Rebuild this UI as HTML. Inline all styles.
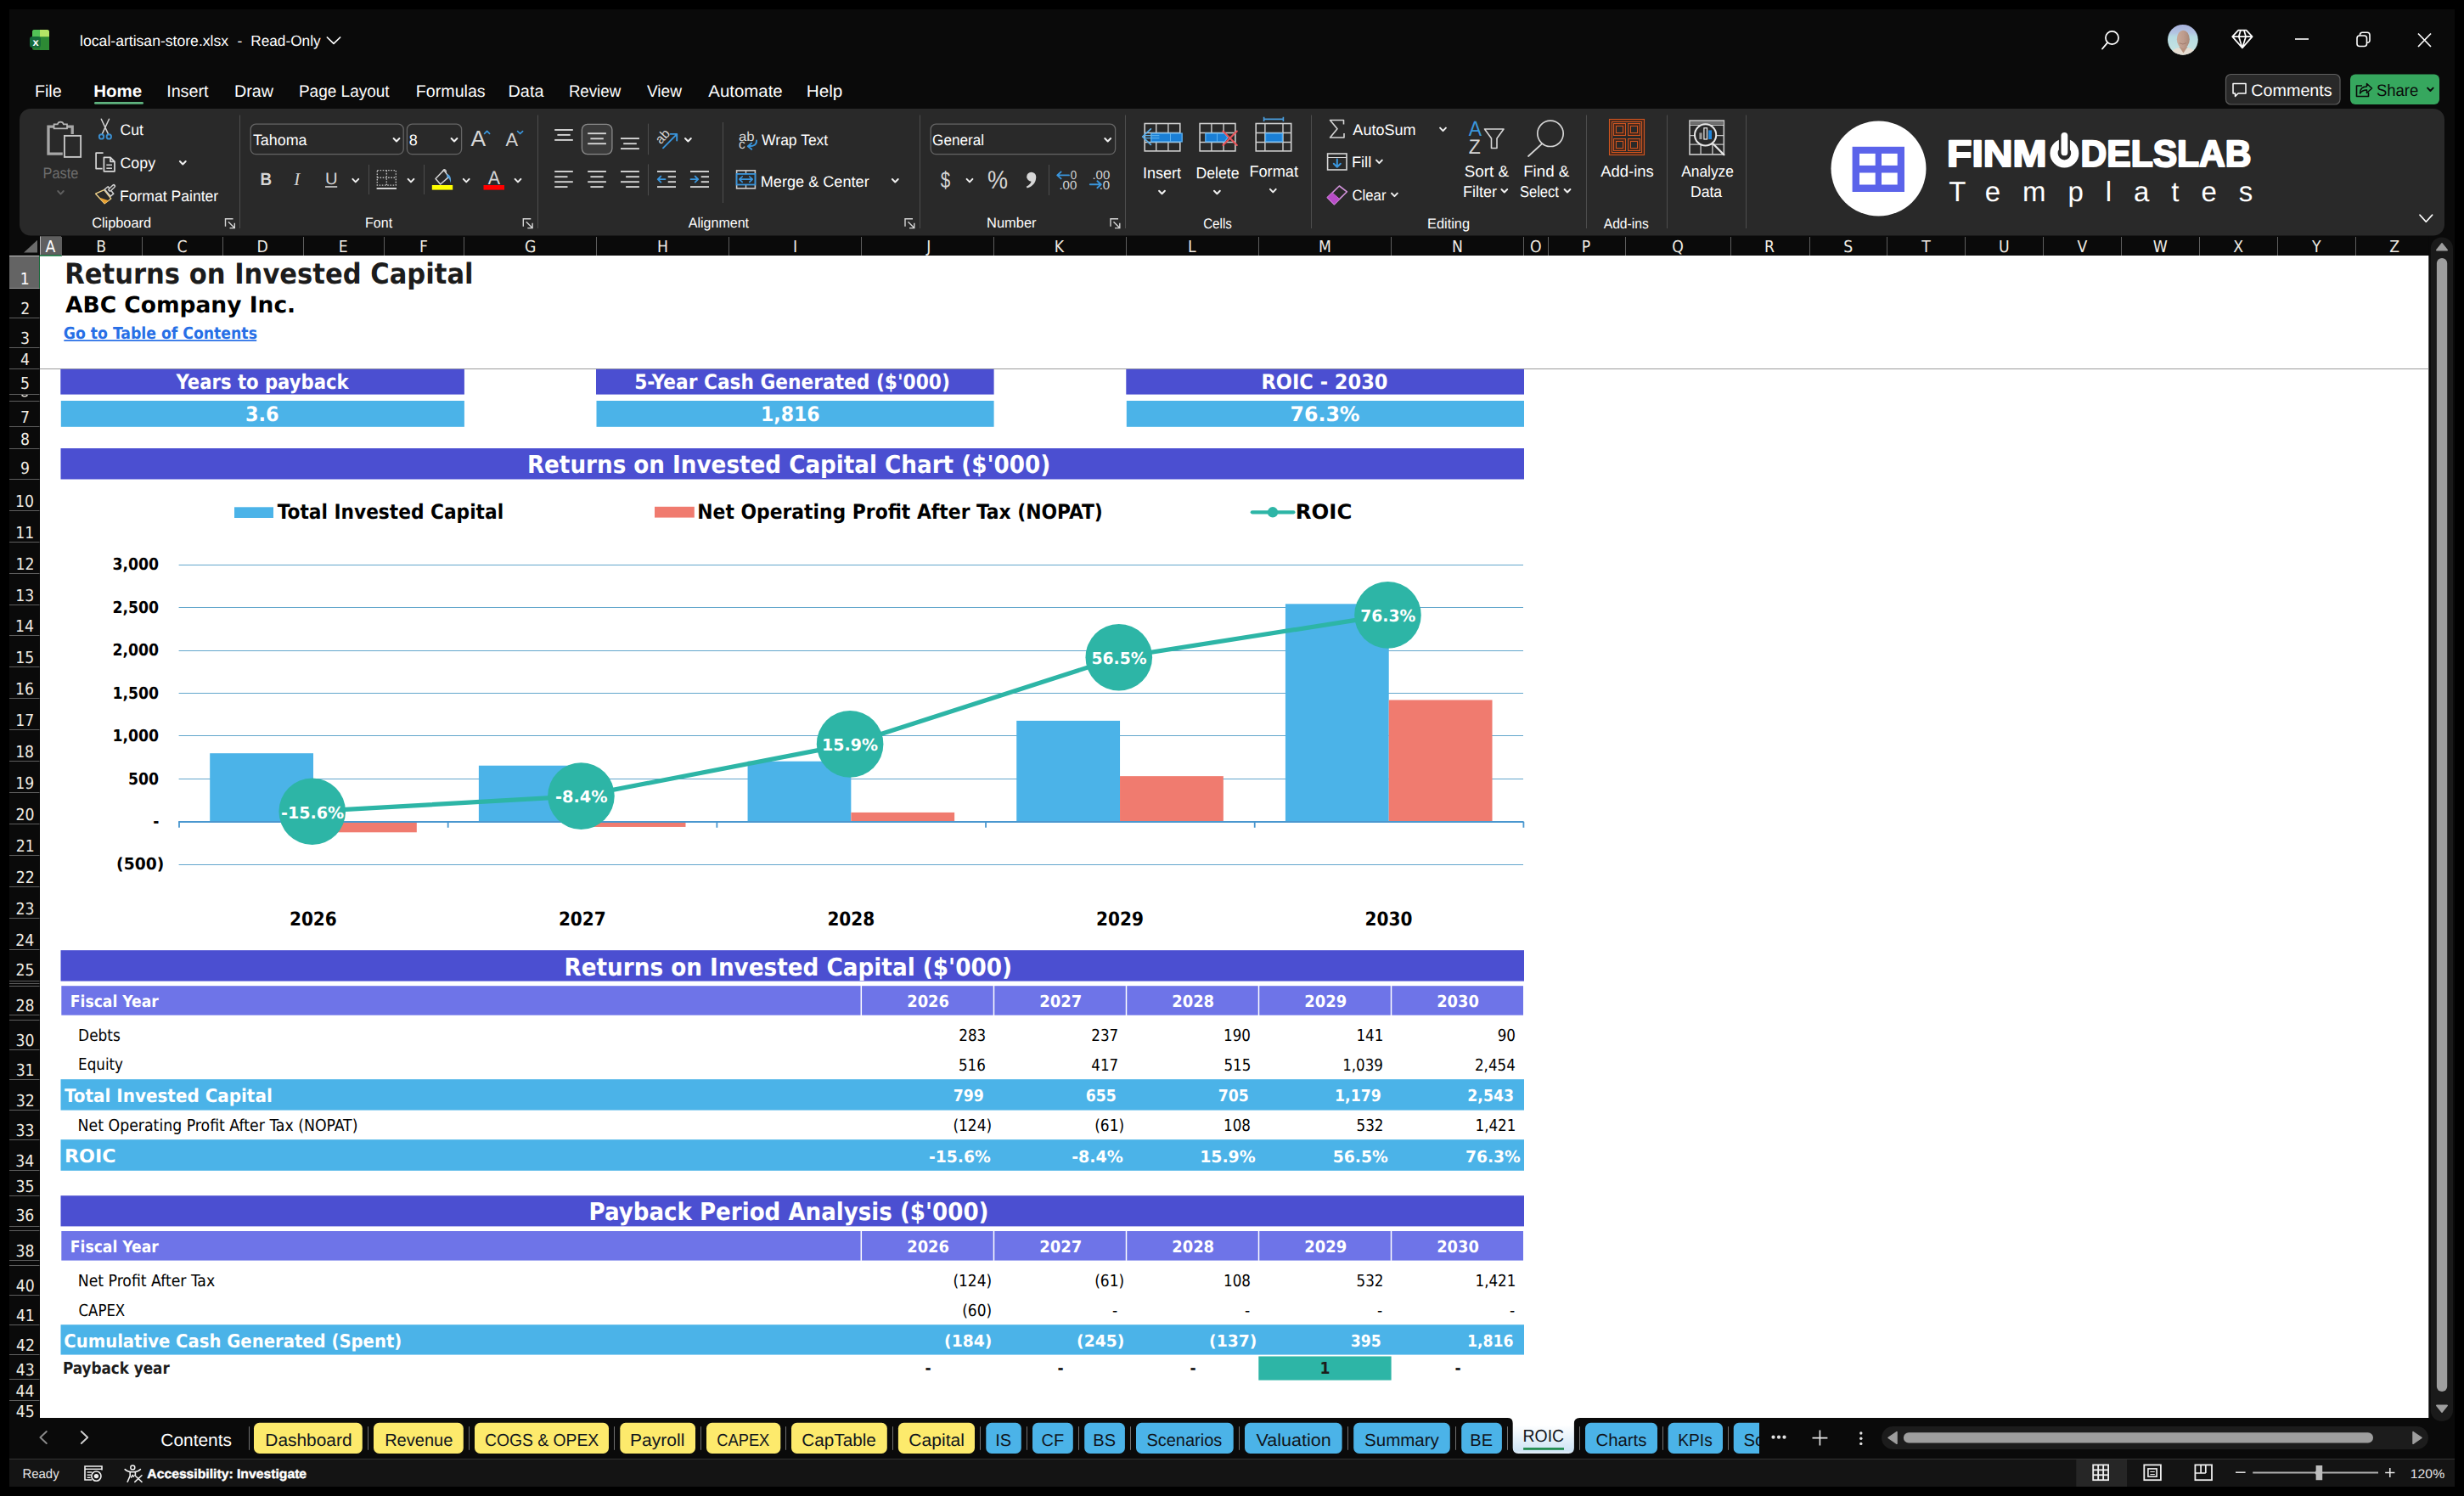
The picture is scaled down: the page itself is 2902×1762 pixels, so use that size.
<!DOCTYPE html>
<html lang="en"><head><meta charset="utf-8"><title>local-artisan-store.xlsx - Excel</title>
<style>html,body{margin:0;padding:0;background:#000;overflow:hidden}svg{display:block}text{white-space:pre}</style></head>
<body>
<svg width="2902" height="1762" viewBox="0 0 2902 1762" text-rendering="geometricPrecision">
<rect width="2902" height="1762" fill="#000"/>
<rect x="11.00" y="11.00" width="2880.00" height="1740.00" fill="#0a0a0a" />
<g transform="translate(35,35)">
<rect x="3.00" y="0.00" width="20.00" height="24.00" fill="#2a7a30" rx="2.5" />
<path d="M3 2.5 a2.5 2.5 0 0 1 2.5 -2.5 H12 V8.5 H3 Z" fill="#52c257" />
<path d="M12 0 H20.5 a2.5 2.5 0 0 1 2.5 2.5 V8.5 H12 Z" fill="#b4e565" />
<rect x="12.00" y="8.50" width="11.00" height="15.50" fill="#2d8a34" />
<rect x="0.00" y="8.00" width="13.00" height="13.00" fill="#156b3a" rx="3" />
</g>
<text x="38.51" y="53.50" font-family="'Liberation Sans', sans-serif" font-size="12.5" fill="#fff" font-weight="bold" textLength="7.18" lengthAdjust="spacingAndGlyphs" >x</text>
<text x="94.12" y="54.00" font-family="'Liberation Sans', sans-serif" font-size="17.5" fill="#fff" textLength="174.97" lengthAdjust="spacingAndGlyphs" >local-artisan-store.xlsx</text>
<text x="279.42" y="54.00" font-family="'Liberation Sans', sans-serif" font-size="17.5" fill="#fff" >-</text>
<text x="295.26" y="54.00" font-family="'Liberation Sans', sans-serif" font-size="17.5" fill="#fff" textLength="82.37" lengthAdjust="spacingAndGlyphs" >Read-Only</text>
<path d="M385.35 44.00 L393.00 51.40 L400.65 44.00" fill="none" stroke="#fff" stroke-width="1.7" stroke-linecap="round" stroke-linejoin="round"/>
<circle cx="2487.50" cy="44.50" r="7.60" fill="none" stroke="#fff" stroke-width="1.7" />
<line x1="2482.00" y1="50.30" x2="2476.00" y2="57.50" stroke="#fff" stroke-width="1.8" stroke-linecap="round"/>
<defs><clipPath id="av"><circle cx="2570.9" cy="46.8" r="17.9"/></clipPath><linearGradient id="avg" x1="0" y1="0" x2="0" y2="1"><stop offset="0" stop-color="#a7b0dc"/><stop offset="0.28" stop-color="#b3c4e2"/><stop offset="0.4" stop-color="#b6dbe2"/><stop offset="1" stop-color="#cbe6e2"/></linearGradient><linearGradient id="avf" x1="0" y1="0" x2="1" y2="0"><stop offset="0" stop-color="#c9a999"/><stop offset="0.55" stop-color="#bd9b8c"/><stop offset="1" stop-color="#a98878"/></linearGradient></defs>
<g clip-path="url(#av)">
<rect x="2552.00" y="28.00" width="38.00" height="38.00" fill="url(#avg)" />
<path d="M2556 66 C2557 59.5 2562 57 2566 56 L2571.5 61 L2577 56 C2582 57.5 2586 60 2587 66 Z" fill="#e6ddd2" />
<path d="M2566.5 55 L2571.5 62.5 L2576.5 55 Z" fill="#b8927f" />
<ellipse cx="2571.3" cy="46.3" rx="7.5" ry="10.6" fill="url(#avf)"/>
<path d="M2566.8 50.8 Q2571 53.2 2575 50.6" fill="none" stroke="#9a7566" stroke-width="0.8" />
</g>
<path d="M2636.2 35.6 H2645.6 L2652.6 43.1 L2640.9 56.4 L2629.2 43.1 Z M2629.2 43.1 H2652.6 M2639 35.6 L2636.7 43.1 L2640.9 56.4 L2645.1 43.1 L2642.8 35.6" fill="none" stroke="#fff" stroke-width="1.7" stroke-linejoin="round"/>
<line x1="2703.00" y1="46.00" x2="2719.00" y2="46.00" stroke="#fff" stroke-width="1.6" />
<rect x="2776.00" y="42.00" width="11.50" height="12.50" fill="none" rx="3" stroke="#fff" stroke-width="1.6" />
<path d="M2779.5 41.8 V41 a2.8 2.8 0 0 1 2.8 -2.8 H2788 a3 3 0 0 1 3 3 V47.5 a2.8 2.8 0 0 1 -2.8 2.8 H2787.8" fill="none" stroke="#fff" stroke-width="1.6" />
<path d="M2848 39.5 L2863 55 M2863 39.5 L2848 55" fill="none" stroke="#fff" stroke-width="1.7" />
<rect x="2621.50" y="87.50" width="134.50" height="35.50" fill="#292929" rx="6" stroke="#5e5e5e" stroke-width="1.2" />
<path d="M2630 98.5 H2645 V110 H2636 L2632.5 113.5 V110 H2630 Z" fill="none" stroke="#fff" stroke-width="1.5" stroke-linejoin="round"/>
<text x="2651.31" y="113.00" font-family="'Liberation Sans', sans-serif" font-size="19.5" fill="#fff" textLength="95.39" lengthAdjust="spacingAndGlyphs" >Comments</text>
<rect x="2768.00" y="87.50" width="105.00" height="35.50" fill="#36a75e" rx="6" />
<path d="M2782 101 H2775.5 V113.5 H2789.5 V109" fill="none" stroke="#0a0a0a" stroke-width="1.6" stroke-linejoin="round"/>
<path d="M2779.5 110 C2779.5 104.5 2783 102 2787.5 102 V98.5 L2793.5 104 L2787.5 109.5 V106 C2784 106 2781.5 107 2779.5 110 Z" fill="none" stroke="#0a0a0a" stroke-width="1.5" stroke-linejoin="round"/>
<text x="2798.91" y="113.00" font-family="'Liberation Sans', sans-serif" font-size="19.5" fill="#0a0a0a" textLength="49.45" lengthAdjust="spacingAndGlyphs" >Share</text>
<path d="M2859.10 103.60 L2862.40 107.00 L2865.70 103.60" fill="none" stroke="#0a0a0a" stroke-width="1.9" stroke-linecap="round" stroke-linejoin="round"/>
<text x="40.98" y="113.60" font-family="'Liberation Sans', sans-serif" font-size="19.8" fill="#fff" textLength="31.70" lengthAdjust="spacingAndGlyphs" >File</text>
<text x="110.18" y="113.60" font-family="'Liberation Sans', sans-serif" font-size="19.8" fill="#fff" font-weight="bold" textLength="57.00" lengthAdjust="spacingAndGlyphs" >Home</text>
<text x="196.17" y="113.60" font-family="'Liberation Sans', sans-serif" font-size="19.8" fill="#fff" textLength="49.37" lengthAdjust="spacingAndGlyphs" >Insert</text>
<text x="275.98" y="113.60" font-family="'Liberation Sans', sans-serif" font-size="19.8" fill="#fff" textLength="45.98" lengthAdjust="spacingAndGlyphs" >Draw</text>
<text x="351.88" y="113.60" font-family="'Liberation Sans', sans-serif" font-size="19.8" fill="#fff" textLength="106.77" lengthAdjust="spacingAndGlyphs" >Page Layout</text>
<text x="489.78" y="113.60" font-family="'Liberation Sans', sans-serif" font-size="19.8" fill="#fff" textLength="81.94" lengthAdjust="spacingAndGlyphs" >Formulas</text>
<text x="598.58" y="113.60" font-family="'Liberation Sans', sans-serif" font-size="19.8" fill="#fff" textLength="41.82" lengthAdjust="spacingAndGlyphs" >Data</text>
<text x="669.88" y="113.60" font-family="'Liberation Sans', sans-serif" font-size="19.8" fill="#fff" textLength="61.28" lengthAdjust="spacingAndGlyphs" >Review</text>
<text x="761.91" y="113.60" font-family="'Liberation Sans', sans-serif" font-size="19.8" fill="#fff" textLength="41.04" lengthAdjust="spacingAndGlyphs" >View</text>
<text x="834.36" y="113.60" font-family="'Liberation Sans', sans-serif" font-size="19.8" fill="#fff" textLength="87.32" lengthAdjust="spacingAndGlyphs" >Automate</text>
<text x="949.68" y="113.60" font-family="'Liberation Sans', sans-serif" font-size="19.8" fill="#fff" textLength="42.66" lengthAdjust="spacingAndGlyphs" >Help</text>
<rect x="111.00" y="120.00" width="58.00" height="2.80" fill="#5fb37f" rx="1.4" />
<rect x="23.00" y="128.00" width="2856.00" height="149.60" fill="#292929" rx="13" />
<path d="M64.5 149.2 H57 V181.2 H73.8" fill="none" stroke="#a6a6a6" stroke-width="3.3" />
<path d="M78 149.2 H85.2 V158" fill="none" stroke="#a6a6a6" stroke-width="3.3" />
<path d="M63.6 151.4 V146.4 H67.8 a3.6 3.6 0 0 1 7 0 H79 V151.4 Z" fill="#292929" stroke="#b8b8b8" stroke-width="1.7" />
<rect x="75.90" y="159.90" width="19.20" height="25.00" fill="#292929" stroke="#c6c6c6" stroke-width="1.9" />
<text x="50.52" y="209.80" font-family="'Liberation Sans', sans-serif" font-size="18" fill="#6c6c6c" textLength="41.98" lengthAdjust="spacingAndGlyphs" >Paste</text>
<path d="M68.20 225.00 L71.50 228.60 L74.80 225.00" fill="none" stroke="#5f5f5f" stroke-width="1.9" stroke-linecap="round" stroke-linejoin="round"/>
<path d="M119.3 140.3 L127.4 157.6 M128.5 140.3 L120.4 157.6" fill="none" stroke="#d4d4d4" stroke-width="1.5" stroke-linecap="round"/>
<circle cx="119.50" cy="160.90" r="2.70" fill="none" stroke="#3b8fd0" stroke-width="1.9" />
<circle cx="128.30" cy="160.90" r="2.70" fill="none" stroke="#3b8fd0" stroke-width="1.9" />
<text x="141.49" y="158.60" font-family="'Liberation Sans', sans-serif" font-size="18" fill="#fff" textLength="27.35" lengthAdjust="spacingAndGlyphs" >Cut</text>
<path d="M121.6 180.2 H113.1 V198.6 H120.6" fill="none" stroke="#d6d6d6" stroke-width="1.7" stroke-linejoin="round"/>
<path d="M122.4 185.3 H130 L135 190.3 V201.8 H122.4 Z M130 185.3 V190.3 H135" fill="none" stroke="#d6d6d6" stroke-width="1.7" stroke-linejoin="round"/>
<line x1="125.30" y1="194.30" x2="132.00" y2="194.30" stroke="#d6d6d6" stroke-width="1.5" />
<line x1="125.30" y1="198.20" x2="132.00" y2="198.20" stroke="#d6d6d6" stroke-width="1.5" />
<text x="141.49" y="198.00" font-family="'Liberation Sans', sans-serif" font-size="18" fill="#fff" textLength="41.55" lengthAdjust="spacingAndGlyphs" >Copy</text>
<path d="M211.90 189.95 L215.30 193.45 L218.70 189.95" fill="none" stroke="#f0f0f0" stroke-width="2.0" stroke-linecap="round" stroke-linejoin="round"/>
<path d="M112.6 228.2 L122.6 223.6 L130.8 234 L123.2 239.8 Z" fill="#292929" stroke="#f3d58c" stroke-width="1.3" stroke-linejoin="round"/>
<path d="M116.8 232.4 L128 236.2 L123.2 239.7 Z" fill="#e9a030" />
<path d="M123.2 223 L127.2 219.8 L133.8 228.2 L130.2 231.2 Z" fill="#292929" stroke="#d0d0d0" stroke-width="1.5" stroke-linejoin="round"/>
<line x1="129.40" y1="223.60" x2="134.00" y2="219.20" stroke="#d0d0d0" stroke-width="4.4" stroke-linecap="round"/>
<line x1="129.60" y1="223.40" x2="133.80" y2="219.40" stroke="#292929" stroke-width="1.5" stroke-linecap="round"/>
<text x="140.92" y="237.00" font-family="'Liberation Sans', sans-serif" font-size="18" fill="#fff" textLength="116.28" lengthAdjust="spacingAndGlyphs" >Format Painter</text>
<text x="108.15" y="268.20" font-family="'Liberation Sans', sans-serif" font-size="16.8" fill="#fff" textLength="69.94" lengthAdjust="spacingAndGlyphs" >Clipboard</text>
<path d="M265.5 266.8 V257.8 H274.5" fill="none" stroke="#d6d6d6" stroke-width="1.4" />
<path d="M269.0 261.3 L276.0 268.3 M276.3 262.8 V268.6 H270.5" fill="none" stroke="#d6d6d6" stroke-width="1.4" />
<line x1="282.50" y1="135.50" x2="282.50" y2="269.00" stroke="#4d4d4d" stroke-width="1" />
<rect x="295.20" y="146.20" width="180.00" height="35.40" fill="none" rx="6" stroke="#666" stroke-width="1.3" />
<text x="297.90" y="171.30" font-family="'Liberation Sans', sans-serif" font-size="18" fill="#fff" textLength="63.70" lengthAdjust="spacingAndGlyphs" >Tahoma</text>
<path d="M463.60 163.05 L467.00 166.55 L470.40 163.05" fill="none" stroke="#f0f0f0" stroke-width="2.0" stroke-linecap="round" stroke-linejoin="round"/>
<rect x="479.40" y="146.20" width="64.20" height="35.40" fill="none" rx="6" stroke="#666" stroke-width="1.3" />
<text x="481.82" y="171.30" font-family="'Liberation Sans', sans-serif" font-size="18" fill="#fff" >8</text>
<path d="M531.60 163.05 L535.00 166.55 L538.40 163.05" fill="none" stroke="#f0f0f0" stroke-width="2.0" stroke-linecap="round" stroke-linejoin="round"/>
<text x="554.45" y="172.00" font-family="'Liberation Sans', sans-serif" font-size="26" fill="#d6d6d6" textLength="17.60" lengthAdjust="spacingAndGlyphs" >A</text>
<path d="M570.6 157.3 L573.6 154.4 L576.6 157.3" fill="none" stroke="#3a96dd" stroke-width="1.7" stroke-linecap="round" stroke-linejoin="round"/>
<text x="595.46" y="172.00" font-family="'Liberation Sans', sans-serif" font-size="22" fill="#d6d6d6" textLength="14.59" lengthAdjust="spacingAndGlyphs" >A</text>
<path d="M609.6 154.6 L612.6 157.5 L615.6 154.6" fill="none" stroke="#3a96dd" stroke-width="1.7" stroke-linecap="round" stroke-linejoin="round"/>
<text x="306.42" y="218.00" font-family="'Liberation Sans', sans-serif" font-size="20.6" fill="#d6d6d6" font-weight="bold" textLength="13.61" lengthAdjust="spacingAndGlyphs" >B</text>
<text x="346.24" y="217.80" font-family="'Liberation Serif', serif" font-size="21" fill="#d6d6d6" style="font-style:italic" >I</text>
<text x="383.00" y="217.20" font-family="'Liberation Sans', sans-serif" font-size="19.5" fill="#d6d6d6" textLength="14.61" lengthAdjust="spacingAndGlyphs" >U</text>
<line x1="383.00" y1="220.00" x2="397.20" y2="220.00" stroke="#d6d6d6" stroke-width="1.6" />
<path d="M415.40 210.85 L418.80 214.35 L422.20 210.85" fill="none" stroke="#f0f0f0" stroke-width="2.0" stroke-linecap="round" stroke-linejoin="round"/>
<line x1="434.50" y1="194.00" x2="434.50" y2="229.00" stroke="#4d4d4d" stroke-width="1" />
<rect x="444.30" y="200.60" width="22.00" height="17.50" fill="none" stroke="#bdbdbd" stroke-width="1.4" stroke-dasharray="1.6 1.6"/>
<line x1="455.30" y1="200.60" x2="455.30" y2="218.00" stroke="#bdbdbd" stroke-width="1.4" stroke-dasharray="1.6 1.6"/>
<line x1="444.30" y1="209.30" x2="466.30" y2="209.30" stroke="#bdbdbd" stroke-width="1.4" stroke-dasharray="1.6 1.6"/>
<line x1="443.60" y1="222.00" x2="467.00" y2="222.00" stroke="#e6e6e6" stroke-width="1.8" />
<path d="M480.60 210.85 L484.00 214.35 L487.40 210.85" fill="none" stroke="#f0f0f0" stroke-width="2.0" stroke-linecap="round" stroke-linejoin="round"/>
<line x1="499.50" y1="194.00" x2="499.50" y2="229.00" stroke="#4d4d4d" stroke-width="1" />
<path d="M522.8 200.2 L528.6 208.4 L518.7 217 L513 210.4 Z" fill="none" stroke="#d6d6d6" stroke-width="1.5" stroke-linejoin="round"/>
<path d="M521.2 202.4 L522.4 200.2 a1.6 1.6 0 0 1 2.6 0.6 L525.4 203.2" fill="none" stroke="#d6d6d6" stroke-width="1.3" />
<path d="M526.6 204.8 C530.6 206.3 531.8 210.6 530.7 215.4 C529.8 211.6 528.6 209.6 526.1 208.3 Z" fill="#5aa5e0" />
<rect x="508.80" y="218.00" width="24.40" height="5.60" fill="#ffff00" />
<path d="M545.80 210.85 L549.20 214.35 L552.60 210.85" fill="none" stroke="#f0f0f0" stroke-width="2.0" stroke-linecap="round" stroke-linejoin="round"/>
<text x="574.76" y="216.50" font-family="'Liberation Sans', sans-serif" font-size="22.6" fill="#d6d6d6" textLength="14.29" lengthAdjust="spacingAndGlyphs" >A</text>
<rect x="569.50" y="218.00" width="24.50" height="5.60" fill="#ff0000" />
<path d="M606.60 210.85 L610.00 214.35 L613.40 210.85" fill="none" stroke="#f0f0f0" stroke-width="2.0" stroke-linecap="round" stroke-linejoin="round"/>
<text x="430.12" y="268.20" font-family="'Liberation Sans', sans-serif" font-size="16.8" fill="#fff" textLength="32.00" lengthAdjust="spacingAndGlyphs" >Font</text>
<path d="M616.3 266.8 V257.8 H625.3" fill="none" stroke="#d6d6d6" stroke-width="1.4" />
<path d="M619.8 261.3 L626.8 268.3 M627.0999999999999 262.8 V268.6 H621.3" fill="none" stroke="#d6d6d6" stroke-width="1.4" />
<line x1="633.50" y1="135.50" x2="633.50" y2="269.00" stroke="#4d4d4d" stroke-width="1" />
<line x1="653.20" y1="153.00" x2="674.80" y2="153.00" stroke="#d6d6d6" stroke-width="1.9" />
<line x1="656.40" y1="158.90" x2="671.70" y2="158.90" stroke="#d6d6d6" stroke-width="1.9" />
<line x1="653.20" y1="164.90" x2="674.80" y2="164.90" stroke="#d6d6d6" stroke-width="1.9" />
<rect x="685.40" y="146.30" width="35.50" height="35.30" fill="#3b3b3b" rx="6.5" stroke="#8a8a8a" stroke-width="1.3" />
<line x1="692.20" y1="157.20" x2="713.90" y2="157.20" stroke="#d6d6d6" stroke-width="1.9" />
<line x1="695.40" y1="163.30" x2="710.80" y2="163.30" stroke="#d6d6d6" stroke-width="1.9" />
<line x1="692.20" y1="169.20" x2="713.90" y2="169.20" stroke="#d6d6d6" stroke-width="1.9" />
<line x1="731.00" y1="163.10" x2="752.90" y2="163.10" stroke="#d6d6d6" stroke-width="1.9" />
<line x1="734.20" y1="169.20" x2="749.80" y2="169.20" stroke="#d6d6d6" stroke-width="1.9" />
<line x1="731.00" y1="175.10" x2="752.90" y2="175.10" stroke="#d6d6d6" stroke-width="1.9" />
<line x1="763.50" y1="145.60" x2="763.50" y2="182.30" stroke="#4d4d4d" stroke-width="1" />
<text x="0.00" y="0.00" font-family="'Liberation Sans', sans-serif" font-size="15.5" fill="#d6d6d6" transform="translate(778.2,170.6) rotate(-47)">ab</text>
<path d="M781 174.3 L796.6 158.6 M789.6 157.9 H797.2 V165.5" fill="none" stroke="#3a96dd" stroke-width="1.9" stroke-linecap="round" stroke-linejoin="round"/>
<path d="M807.00 163.05 L810.40 166.55 L813.80 163.05" fill="none" stroke="#f0f0f0" stroke-width="2.0" stroke-linecap="round" stroke-linejoin="round"/>
<line x1="851.50" y1="144.00" x2="851.50" y2="239.00" stroke="#4d4d4d" stroke-width="1" />
<text x="869.94" y="165.60" font-family="'Liberation Sans', sans-serif" font-size="15.5" fill="#d6d6d6" textLength="18.71" lengthAdjust="spacingAndGlyphs" >ab</text>
<text x="869.94" y="174.60" font-family="'Liberation Sans', sans-serif" font-size="15.5" fill="#d6d6d6" >c</text>
<path d="M891 165.4 C891.4 170.5 888 172.4 881.4 172.2 M885.2 168.6 L880.8 172.2 L885.2 175.8" fill="none" stroke="#3a96dd" stroke-width="1.9" stroke-linecap="round" stroke-linejoin="round"/>
<text x="897.12" y="170.80" font-family="'Liberation Sans', sans-serif" font-size="18" fill="#fff" textLength="78.11" lengthAdjust="spacingAndGlyphs" >Wrap Text</text>
<line x1="653.20" y1="202.00" x2="674.80" y2="202.00" stroke="#d6d6d6" stroke-width="1.9" />
<line x1="692.20" y1="202.00" x2="713.90" y2="202.00" stroke="#d6d6d6" stroke-width="1.9" />
<line x1="731.00" y1="202.00" x2="752.90" y2="202.00" stroke="#d6d6d6" stroke-width="1.9" />
<line x1="653.20" y1="208.20" x2="668.50" y2="208.20" stroke="#d6d6d6" stroke-width="1.9" />
<line x1="695.40" y1="208.20" x2="710.70" y2="208.20" stroke="#d6d6d6" stroke-width="1.9" />
<line x1="737.10" y1="208.20" x2="752.90" y2="208.20" stroke="#d6d6d6" stroke-width="1.9" />
<line x1="653.20" y1="214.20" x2="674.80" y2="214.20" stroke="#d6d6d6" stroke-width="1.9" />
<line x1="692.20" y1="214.20" x2="713.90" y2="214.20" stroke="#d6d6d6" stroke-width="1.9" />
<line x1="731.00" y1="214.20" x2="752.90" y2="214.20" stroke="#d6d6d6" stroke-width="1.9" />
<line x1="653.20" y1="220.10" x2="668.50" y2="220.10" stroke="#d6d6d6" stroke-width="1.9" />
<line x1="695.40" y1="220.10" x2="710.70" y2="220.10" stroke="#d6d6d6" stroke-width="1.9" />
<line x1="737.10" y1="220.10" x2="752.90" y2="220.10" stroke="#d6d6d6" stroke-width="1.9" />
<line x1="763.50" y1="193.40" x2="763.50" y2="230.30" stroke="#4d4d4d" stroke-width="1" />
<line x1="774.00" y1="202.00" x2="796.00" y2="202.00" stroke="#d6d6d6" stroke-width="1.9" />
<line x1="774.00" y1="220.10" x2="796.00" y2="220.10" stroke="#d6d6d6" stroke-width="1.9" />
<line x1="786.70" y1="208.20" x2="796.00" y2="208.20" stroke="#d6d6d6" stroke-width="1.9" />
<line x1="786.70" y1="214.20" x2="796.00" y2="214.20" stroke="#d6d6d6" stroke-width="1.9" />
<path d="M783.5 211.1 H775 M778.3 207.6 L774.8 211.1 L778.3 214.6" fill="none" stroke="#3a96dd" stroke-width="1.9" stroke-linecap="round" stroke-linejoin="round"/>
<line x1="813.00" y1="202.00" x2="835.00" y2="202.00" stroke="#d6d6d6" stroke-width="1.9" />
<line x1="813.00" y1="220.10" x2="835.00" y2="220.10" stroke="#d6d6d6" stroke-width="1.9" />
<line x1="825.70" y1="208.20" x2="835.00" y2="208.20" stroke="#d6d6d6" stroke-width="1.9" />
<line x1="825.70" y1="214.20" x2="835.00" y2="214.20" stroke="#d6d6d6" stroke-width="1.9" />
<path d="M813.5 211.1 H822 M818.7 207.6 L822.2 211.1 L818.7 214.6" fill="none" stroke="#3a96dd" stroke-width="1.9" stroke-linecap="round" stroke-linejoin="round"/>
<rect x="867.60" y="200.90" width="21.80" height="21.00" fill="none" stroke="#cfcfcf" stroke-width="1.6" />
<line x1="878.50" y1="200.90" x2="878.50" y2="205.00" stroke="#cfcfcf" stroke-width="1.4" />
<line x1="878.50" y1="217.40" x2="878.50" y2="221.90" stroke="#cfcfcf" stroke-width="1.4" />
<rect x="867.60" y="204.90" width="21.80" height="12.60" fill="#292929" stroke="#3a96dd" stroke-width="1.8" />
<path d="M871 211.2 H886 M874.2 208 L870.8 211.2 L874.2 214.4 M882.8 208 L886.2 211.2 L882.8 214.4" fill="none" stroke="#3a96dd" stroke-width="1.7" stroke-linecap="round" stroke-linejoin="round"/>
<text x="895.72" y="219.50" font-family="'Liberation Sans', sans-serif" font-size="18" fill="#fff" textLength="127.98" lengthAdjust="spacingAndGlyphs" >Merge &amp; Center</text>
<path d="M1050.90 210.95 L1054.30 214.45 L1057.70 210.95" fill="none" stroke="#f0f0f0" stroke-width="2.0" stroke-linecap="round" stroke-linejoin="round"/>
<text x="810.77" y="268.20" font-family="'Liberation Sans', sans-serif" font-size="16.8" fill="#fff" textLength="71.26" lengthAdjust="spacingAndGlyphs" >Alignment</text>
<path d="M1066 266.8 V257.8 H1075" fill="none" stroke="#d6d6d6" stroke-width="1.4" />
<path d="M1069.5 261.3 L1076.5 268.3 M1076.8 262.8 V268.6 H1071" fill="none" stroke="#d6d6d6" stroke-width="1.4" />
<line x1="1083.50" y1="135.50" x2="1083.50" y2="269.00" stroke="#4d4d4d" stroke-width="1" />
<rect x="1096.20" y="146.20" width="217.40" height="35.40" fill="none" rx="6" stroke="#666" stroke-width="1.3" />
<text x="1098.09" y="171.30" font-family="'Liberation Sans', sans-serif" font-size="18" fill="#fff" textLength="61.01" lengthAdjust="spacingAndGlyphs" >General</text>
<path d="M1301.30 163.05 L1304.70 166.55 L1308.10 163.05" fill="none" stroke="#f0f0f0" stroke-width="2.0" stroke-linecap="round" stroke-linejoin="round"/>
<text x="1107.71" y="220.60" font-family="'Liberation Sans', sans-serif" font-size="27" fill="#d6d6d6" textLength="11.53" lengthAdjust="spacingAndGlyphs" >$</text>
<path d="M1138.60 210.85 L1142.00 214.35 L1145.40 210.85" fill="none" stroke="#f0f0f0" stroke-width="2.0" stroke-linecap="round" stroke-linejoin="round"/>
<text x="1162.93" y="222.40" font-family="'Liberation Sans', sans-serif" font-size="30" fill="#d6d6d6" textLength="24.04" lengthAdjust="spacingAndGlyphs" >%</text>
<circle cx="1214.70" cy="208.20" r="5.50" fill="#d6d6d6" />
<path d="M1220.2 208.2 C1220.4 215 1216.2 219.6 1209.6 221.6 L1208.8 219.7 C1212.6 218 1214.6 215.6 1214.7 212.6 Z" fill="#d6d6d6" />
<line x1="1235.50" y1="194.00" x2="1235.50" y2="230.00" stroke="#4d4d4d" stroke-width="1" />
<text x="1260.85" y="210.60" font-family="'Liberation Sans', sans-serif" font-size="14.2" fill="#d6d6d6" textLength="7.41" lengthAdjust="spacingAndGlyphs" >0</text>
<text x="1247.40" y="222.60" font-family="'Liberation Sans', sans-serif" font-size="14.2" fill="#d6d6d6" textLength="20.85" lengthAdjust="spacingAndGlyphs" >.00</text>
<path d="M1259 206.4 H1245.4 M1249.6 202.4 L1245.2 206.4 L1249.6 210.4" fill="none" stroke="#3a96dd" stroke-width="1.9" stroke-linecap="round" stroke-linejoin="round"/>
<text x="1286.40" y="210.60" font-family="'Liberation Sans', sans-serif" font-size="14.2" fill="#d6d6d6" textLength="20.85" lengthAdjust="spacingAndGlyphs" >.00</text>
<text x="1294.70" y="222.60" font-family="'Liberation Sans', sans-serif" font-size="14.2" fill="#d6d6d6" textLength="12.55" lengthAdjust="spacingAndGlyphs" >.0</text>
<path d="M1283.8 217.3 H1296.6 M1292.4 213.3 L1296.8 217.3 L1292.4 221.3" fill="none" stroke="#3a96dd" stroke-width="1.9" stroke-linecap="round" stroke-linejoin="round"/>
<text x="1162.12" y="267.80" font-family="'Liberation Sans', sans-serif" font-size="16.8" fill="#fff" textLength="58.36" lengthAdjust="spacingAndGlyphs" >Number</text>
<path d="M1308 266.8 V257.8 H1317" fill="none" stroke="#d6d6d6" stroke-width="1.4" />
<path d="M1311.5 261.3 L1318.5 268.3 M1318.8 262.8 V268.6 H1313" fill="none" stroke="#d6d6d6" stroke-width="1.4" />
<line x1="1325.50" y1="135.50" x2="1325.50" y2="269.00" stroke="#4d4d4d" stroke-width="1" />
<rect x="1348.20" y="145.50" width="41.60" height="32.40" fill="none" stroke="#cfcfcf" stroke-width="1.6" />
<line x1="1348.20" y1="156.50" x2="1389.80" y2="156.50" stroke="#cfcfcf" stroke-width="1.4" />
<line x1="1348.20" y1="167.50" x2="1389.80" y2="167.50" stroke="#cfcfcf" stroke-width="1.4" />
<line x1="1361.70" y1="145.50" x2="1361.70" y2="177.90" stroke="#cfcfcf" stroke-width="1.4" />
<line x1="1375.90" y1="145.50" x2="1375.90" y2="177.90" stroke="#cfcfcf" stroke-width="1.4" />
<rect x="1355.80" y="157.10" width="36.40" height="9.80" fill="#1a7fd6" stroke="#5cb2f2" stroke-width="1.3" />
<line x1="1378.50" y1="157.10" x2="1378.50" y2="166.90" stroke="#5cb2f2" stroke-width="1" />
<path d="M1355.4 151.8 L1345.6 161 L1355.4 170.4" fill="none" stroke="#5aaeea" stroke-width="1.7" stroke-linecap="round" stroke-linejoin="round"/>
<path d="M1347.6 159.6 H1365.4 M1347.6 162.6 H1365.4" fill="none" stroke="#5aaeea" stroke-width="1.3" />
<text x="1345.99" y="209.50" font-family="'Liberation Sans', sans-serif" font-size="18.5" fill="#fff" textLength="45.04" lengthAdjust="spacingAndGlyphs" >Insert</text>
<path d="M1365.10 224.75 L1368.50 228.25 L1371.90 224.75" fill="none" stroke="#f0f0f0" stroke-width="2.0" stroke-linecap="round" stroke-linejoin="round"/>
<rect x="1413.10" y="145.50" width="41.80" height="32.40" fill="none" stroke="#cfcfcf" stroke-width="1.6" />
<line x1="1413.10" y1="156.50" x2="1454.90" y2="156.50" stroke="#cfcfcf" stroke-width="1.4" />
<line x1="1413.10" y1="167.50" x2="1454.90" y2="167.50" stroke="#cfcfcf" stroke-width="1.4" />
<line x1="1426.90" y1="145.50" x2="1426.90" y2="177.90" stroke="#cfcfcf" stroke-width="1.4" />
<line x1="1441.10" y1="145.50" x2="1441.10" y2="177.90" stroke="#cfcfcf" stroke-width="1.4" />
<path d="M1419.8 157.1 H1442.4 L1446 162 L1442.4 166.9 H1419.8 Z" fill="#1a7fd6" stroke="#5cb2f2" stroke-width="1.3" />
<line x1="1433.50" y1="157.10" x2="1433.50" y2="166.90" stroke="#5cb2f2" stroke-width="1" />
<path d="M1440.4 154.6 L1456.8 171 M1456.8 154.6 L1440.4 171" fill="none" stroke="#e8545a" stroke-width="2.1" stroke-linecap="round"/>
<text x="1408.38" y="209.60" font-family="'Liberation Sans', sans-serif" font-size="18.5" fill="#fff" textLength="51.24" lengthAdjust="spacingAndGlyphs" >Delete</text>
<path d="M1430.00 224.75 L1433.40 228.25 L1436.80 224.75" fill="none" stroke="#f0f0f0" stroke-width="2.0" stroke-linecap="round" stroke-linejoin="round"/>
<rect x="1479.20" y="145.50" width="41.50" height="32.40" fill="none" stroke="#cfcfcf" stroke-width="1.6" />
<line x1="1479.20" y1="156.50" x2="1520.70" y2="156.50" stroke="#cfcfcf" stroke-width="1.4" />
<line x1="1479.20" y1="167.50" x2="1520.70" y2="167.50" stroke="#cfcfcf" stroke-width="1.4" />
<line x1="1489.90" y1="145.50" x2="1489.90" y2="177.90" stroke="#cfcfcf" stroke-width="1.4" />
<line x1="1511.00" y1="145.50" x2="1511.00" y2="177.90" stroke="#cfcfcf" stroke-width="1.4" />
<rect x="1490.50" y="157.10" width="19.90" height="9.80" fill="#1a7fd6" stroke="#5cb2f2" stroke-width="1.3" />
<path d="M1488.6 140.4 H1511.4 M1488.6 137.8 V143 M1511.4 137.8 V143" fill="none" stroke="#4a9fe0" stroke-width="1.6" />
<text x="1471.38" y="207.80" font-family="'Liberation Sans', sans-serif" font-size="18.5" fill="#fff" textLength="57.65" lengthAdjust="spacingAndGlyphs" >Format</text>
<path d="M1495.90 222.85 L1499.30 226.35 L1502.70 222.85" fill="none" stroke="#f0f0f0" stroke-width="2.0" stroke-linecap="round" stroke-linejoin="round"/>
<text x="1417.15" y="268.50" font-family="'Liberation Sans', sans-serif" font-size="16.8" fill="#fff" textLength="33.76" lengthAdjust="spacingAndGlyphs" >Cells</text>
<line x1="1544.50" y1="135.50" x2="1544.50" y2="269.00" stroke="#4d4d4d" stroke-width="1" />
<path d="M1582.5 146.5 V141.5 H1566.5 L1575 151.7 L1566.5 162 H1583 V157" fill="none" stroke="#d6d6d6" stroke-width="1.6" stroke-linejoin="round"/>
<text x="1593.36" y="159.00" font-family="'Liberation Sans', sans-serif" font-size="18" fill="#fff" textLength="74.22" lengthAdjust="spacingAndGlyphs" >AutoSum</text>
<path d="M1696.10 150.65 L1699.50 154.15 L1702.90 150.65" fill="none" stroke="#f0f0f0" stroke-width="2.0" stroke-linecap="round" stroke-linejoin="round"/>
<rect x="1563.60" y="181.00" width="22.40" height="19.00" fill="none" stroke="#d6d6d6" stroke-width="1.6" />
<line x1="1563.60" y1="185.50" x2="1586.00" y2="185.50" stroke="#d6d6d6" stroke-width="1" />
<path d="M1574.8 187.6 V196.6 M1570.8 192.8 L1574.8 196.8 L1578.8 192.8" fill="none" stroke="#3a96dd" stroke-width="2" stroke-linecap="round" stroke-linejoin="round"/>
<text x="1591.92" y="197.40" font-family="'Liberation Sans', sans-serif" font-size="18" fill="#fff" textLength="23.28" lengthAdjust="spacingAndGlyphs" >Fill</text>
<path d="M1621.00 188.65 L1624.40 192.15 L1627.80 188.65" fill="none" stroke="#f0f0f0" stroke-width="2.0" stroke-linecap="round" stroke-linejoin="round"/>
<path d="M1563.4 232.6 L1577.4 219 L1586.4 225.8 L1571.4 240.6 Z" fill="none" stroke="#d493dc" stroke-width="1.6" stroke-linejoin="round"/>
<path d="M1563.4 232.6 L1569.2 227 L1577.6 234.4 L1571.4 240.6 Z" fill="#b84cc8" stroke="#c565d2" stroke-width="1" />
<text x="1592.49" y="236.40" font-family="'Liberation Sans', sans-serif" font-size="18" fill="#fff" textLength="40.01" lengthAdjust="spacingAndGlyphs" >Clear</text>
<path d="M1639.00 227.65 L1642.40 231.15 L1645.80 227.65" fill="none" stroke="#f0f0f0" stroke-width="2.0" stroke-linecap="round" stroke-linejoin="round"/>
<text x="1729.85" y="160.00" font-family="'Liberation Sans', sans-serif" font-size="25" fill="#3a96dd" textLength="15.30" lengthAdjust="spacingAndGlyphs" >A</text>
<text x="1729.84" y="181.30" font-family="'Liberation Sans', sans-serif" font-size="24" fill="#d6d6d6" textLength="14.11" lengthAdjust="spacingAndGlyphs" >Z</text>
<path d="M1748.5 152 H1771 L1763 163 V174.5 H1756.5 V163 Z" fill="none" stroke="#d6d6d6" stroke-width="1.6" stroke-linejoin="round"/>
<text x="1724.66" y="207.70" font-family="'Liberation Sans', sans-serif" font-size="18.5" fill="#fff" textLength="52.33" lengthAdjust="spacingAndGlyphs" >Sort &amp;</text>
<text x="1723.08" y="232.00" font-family="'Liberation Sans', sans-serif" font-size="18.5" fill="#fff" textLength="40.02" lengthAdjust="spacingAndGlyphs" >Filter</text>
<path d="M1768.40 222.95 L1771.80 226.45 L1775.20 222.95" fill="none" stroke="#f0f0f0" stroke-width="2.0" stroke-linecap="round" stroke-linejoin="round"/>
<circle cx="1826.00" cy="157.30" r="15.20" fill="none" stroke="#d6d6d6" stroke-width="1.7" />
<line x1="1816.00" y1="169.30" x2="1800.00" y2="184.00" stroke="#d6d6d6" stroke-width="1.8" stroke-linecap="round"/>
<text x="1794.18" y="207.70" font-family="'Liberation Sans', sans-serif" font-size="18.5" fill="#fff" textLength="54.11" lengthAdjust="spacingAndGlyphs" >Find &amp;</text>
<text x="1789.96" y="232.00" font-family="'Liberation Sans', sans-serif" font-size="18.5" fill="#fff" textLength="45.98" lengthAdjust="spacingAndGlyphs" >Select</text>
<path d="M1842.60 222.95 L1846.00 226.45 L1849.40 222.95" fill="none" stroke="#f0f0f0" stroke-width="2.0" stroke-linecap="round" stroke-linejoin="round"/>
<text x="1681.02" y="268.50" font-family="'Liberation Sans', sans-serif" font-size="16.8" fill="#fff" textLength="50.06" lengthAdjust="spacingAndGlyphs" >Editing</text>
<line x1="1868.50" y1="135.50" x2="1868.50" y2="269.00" stroke="#4d4d4d" stroke-width="1" />
<rect x="1895.50" y="140.50" width="41.00" height="42.00" fill="#4a281b" stroke="#cf5520" stroke-width="1.1" />
<rect x="1898.50" y="143.50" width="35.00" height="36.00" fill="#292929" stroke="#cf5520" stroke-width="1" />
<rect x="1900.50" y="145.50" width="14.00" height="14.00" fill="#4a281b" stroke="#cf5520" stroke-width="1" />
<rect x="1903.50" y="148.50" width="8.00" height="8.00" fill="#292929" stroke="#cf5520" stroke-width="1" />
<rect x="1900.50" y="163.50" width="14.00" height="14.00" fill="#4a281b" stroke="#cf5520" stroke-width="1" />
<rect x="1903.50" y="166.50" width="8.00" height="8.00" fill="#292929" stroke="#cf5520" stroke-width="1" />
<rect x="1917.50" y="145.50" width="14.00" height="14.00" fill="#4a281b" stroke="#cf5520" stroke-width="1" />
<rect x="1920.50" y="148.50" width="8.00" height="8.00" fill="#292929" stroke="#cf5520" stroke-width="1" />
<rect x="1917.50" y="163.50" width="14.00" height="14.00" fill="#4a281b" stroke="#cf5520" stroke-width="1" />
<rect x="1920.50" y="166.50" width="8.00" height="8.00" fill="#292929" stroke="#cf5520" stroke-width="1" />
<text x="1885.26" y="207.70" font-family="'Liberation Sans', sans-serif" font-size="18.5" fill="#fff" textLength="62.50" lengthAdjust="spacingAndGlyphs" >Add-ins</text>
<text x="1888.67" y="268.50" font-family="'Liberation Sans', sans-serif" font-size="16.8" fill="#fff" textLength="53.24" lengthAdjust="spacingAndGlyphs" >Add-ins</text>
<line x1="1963.50" y1="135.50" x2="1963.50" y2="269.00" stroke="#4d4d4d" stroke-width="1" />
<rect x="1990.00" y="142.10" width="40.30" height="39.80" fill="none" stroke="#c4c4c4" stroke-width="1.7" />
<rect x="1990.80" y="142.90" width="38.70" height="3.90" fill="#6e6e6e" />
<line x1="1990.00" y1="147.50" x2="2030.30" y2="147.50" stroke="#c4c4c4" stroke-width="1" />
<line x1="1990.00" y1="159.60" x2="2030.30" y2="159.60" stroke="#c4c4c4" stroke-width="1.4" />
<line x1="1990.00" y1="170.10" x2="2030.30" y2="170.10" stroke="#c4c4c4" stroke-width="1.4" />
<line x1="2003.10" y1="170.10" x2="2003.10" y2="181.90" stroke="#c4c4c4" stroke-width="1.4" />
<line x1="2016.90" y1="170.10" x2="2016.90" y2="181.90" stroke="#c4c4c4" stroke-width="1.4" />
<circle cx="2008.60" cy="158.90" r="12.60" fill="#292929" stroke="#e8e8e8" stroke-width="2" />
<rect x="2001.40" y="156.40" width="3.20" height="7.60" fill="#9a9a9a" />
<rect x="2006.90" y="150.80" width="3.60" height="13.20" fill="#292929" stroke="#f0f0f0" stroke-width="1.2" />
<rect x="2012.20" y="153.40" width="3.80" height="10.60" fill="#1f86de" />
<line x1="2018.00" y1="169.80" x2="2030.40" y2="182.20" stroke="#e8e8e8" stroke-width="2.3" stroke-linecap="round"/>
<text x="1980.16" y="207.70" font-family="'Liberation Sans', sans-serif" font-size="18.5" fill="#fff" textLength="61.76" lengthAdjust="spacingAndGlyphs" >Analyze</text>
<text x="1990.88" y="232.00" font-family="'Liberation Sans', sans-serif" font-size="18.5" fill="#fff" textLength="37.32" lengthAdjust="spacingAndGlyphs" >Data</text>
<line x1="2056.50" y1="135.50" x2="2056.50" y2="269.00" stroke="#4d4d4d" stroke-width="1" />
<circle cx="2212.50" cy="198.60" r="56.00" fill="#fff" />
<rect x="2181.60" y="172.80" width="61.40" height="53.20" fill="#5b63ea" />
<rect x="2190.00" y="180.90" width="18.70" height="14.00" fill="#fff" />
<rect x="2190.00" y="203.50" width="18.70" height="14.00" fill="#fff" />
<rect x="2216.00" y="180.90" width="18.70" height="14.00" fill="#fff" />
<rect x="2216.00" y="203.50" width="18.70" height="14.00" fill="#fff" />
<text x="2293.06" y="196.40" font-family="'Liberation Sans', sans-serif" font-size="44" fill="#fff" font-weight="bold" textLength="117.39" lengthAdjust="spacingAndGlyphs" stroke="#fff" stroke-width="2.2" stroke-linejoin="round">FINM</text>
<circle cx="2431.40" cy="180.60" r="12.40" fill="none" stroke="#fff" stroke-width="9.2" />
<rect x="2426.20" y="154.60" width="10.40" height="30.00" fill="#fff" rx="5.2" stroke="#292929" stroke-width="2.6" />
<text x="2450.56" y="196.40" font-family="'Liberation Sans', sans-serif" font-size="44" fill="#fff" font-weight="bold" textLength="200.94" lengthAdjust="spacingAndGlyphs" stroke="#fff" stroke-width="2.2" stroke-linejoin="round">DELSLAB</text>
<text x="2295.26" y="236.90" font-family="'Liberation Sans', sans-serif" font-size="33" fill="#fff" textLength="357.93" lengthAdjust="spacing" >Templates</text>
<path d="M2850.05 253.20 L2857.30 261.20 L2864.55 253.20" fill="none" stroke="#fff" stroke-width="1.7" stroke-linecap="round" stroke-linejoin="round"/>
<rect x="47.00" y="301.00" width="2813.30" height="1369.00" fill="#fff" />
<rect x="11.00" y="278.00" width="2849.30" height="23.00" fill="#0a0a0a" />
<clipPath id="chc"><rect x="47" y="278" width="2813.3" height="24"/></clipPath>
<g clip-path="url(#chc)">
<rect x="47.30" y="278.20" width="24.70" height="22.10" fill="#5f5f5f" />
<line x1="47.50" y1="278.50" x2="47.50" y2="300.30" stroke="#b4b4b4" stroke-width="1" />
<line x1="46.40" y1="301.00" x2="73.00" y2="301.00" stroke="#1a7f45" stroke-width="1.7" />
<line x1="72.50" y1="279.00" x2="72.50" y2="301.00" stroke="#5e5e5e" stroke-width="1" />
<text x="59.50" y="296.80" font-family="'DejaVu Sans Condensed', 'DejaVu Sans', sans-serif" font-size="19.2" fill="#fff" text-anchor="middle" >A</text>
<line x1="167.50" y1="279.00" x2="167.50" y2="301.00" stroke="#5e5e5e" stroke-width="1" />
<text x="119.27" y="296.80" font-family="'DejaVu Sans Condensed', 'DejaVu Sans', sans-serif" font-size="19.2" fill="#f0ece4" text-anchor="middle" >B</text>
<line x1="262.50" y1="279.00" x2="262.50" y2="301.00" stroke="#5e5e5e" stroke-width="1" />
<text x="214.48" y="296.80" font-family="'DejaVu Sans Condensed', 'DejaVu Sans', sans-serif" font-size="19.2" fill="#f0ece4" text-anchor="middle" >C</text>
<line x1="357.50" y1="279.00" x2="357.50" y2="301.00" stroke="#5e5e5e" stroke-width="1" />
<text x="309.16" y="296.80" font-family="'DejaVu Sans Condensed', 'DejaVu Sans', sans-serif" font-size="19.2" fill="#f0ece4" text-anchor="middle" >D</text>
<line x1="452.50" y1="279.00" x2="452.50" y2="301.00" stroke="#5e5e5e" stroke-width="1" />
<text x="404.20" y="296.80" font-family="'DejaVu Sans Condensed', 'DejaVu Sans', sans-serif" font-size="19.2" fill="#f0ece4" text-anchor="middle" >E</text>
<line x1="546.50" y1="279.00" x2="546.50" y2="301.00" stroke="#5e5e5e" stroke-width="1" />
<text x="498.90" y="296.80" font-family="'DejaVu Sans Condensed', 'DejaVu Sans', sans-serif" font-size="19.2" fill="#f0ece4" text-anchor="middle" >F</text>
<line x1="702.50" y1="279.00" x2="702.50" y2="301.00" stroke="#5e5e5e" stroke-width="1" />
<text x="624.67" y="296.80" font-family="'DejaVu Sans Condensed', 'DejaVu Sans', sans-serif" font-size="19.2" fill="#f0ece4" text-anchor="middle" >G</text>
<line x1="858.50" y1="279.00" x2="858.50" y2="301.00" stroke="#5e5e5e" stroke-width="1" />
<text x="780.45" y="296.80" font-family="'DejaVu Sans Condensed', 'DejaVu Sans', sans-serif" font-size="19.2" fill="#f0ece4" text-anchor="middle" >H</text>
<line x1="1014.50" y1="279.00" x2="1014.50" y2="301.00" stroke="#5e5e5e" stroke-width="1" />
<text x="936.50" y="296.80" font-family="'DejaVu Sans Condensed', 'DejaVu Sans', sans-serif" font-size="19.2" fill="#f0ece4" text-anchor="middle" >I</text>
<line x1="1170.50" y1="279.00" x2="1170.50" y2="301.00" stroke="#5e5e5e" stroke-width="1" />
<text x="1093.78" y="296.80" font-family="'DejaVu Sans Condensed', 'DejaVu Sans', sans-serif" font-size="19.2" fill="#f0ece4" text-anchor="middle" >J</text>
<line x1="1326.50" y1="279.00" x2="1326.50" y2="301.00" stroke="#5e5e5e" stroke-width="1" />
<text x="1247.47" y="296.80" font-family="'DejaVu Sans Condensed', 'DejaVu Sans', sans-serif" font-size="19.2" fill="#f0ece4" text-anchor="middle" >K</text>
<line x1="1482.50" y1="279.00" x2="1482.50" y2="301.00" stroke="#5e5e5e" stroke-width="1" />
<text x="1403.70" y="296.80" font-family="'DejaVu Sans Condensed', 'DejaVu Sans', sans-serif" font-size="19.2" fill="#f0ece4" text-anchor="middle" >L</text>
<line x1="1638.50" y1="279.00" x2="1638.50" y2="301.00" stroke="#5e5e5e" stroke-width="1" />
<text x="1560.50" y="296.80" font-family="'DejaVu Sans Condensed', 'DejaVu Sans', sans-serif" font-size="19.2" fill="#f0ece4" text-anchor="middle" >M</text>
<line x1="1794.50" y1="279.00" x2="1794.50" y2="301.00" stroke="#5e5e5e" stroke-width="1" />
<text x="1716.50" y="296.80" font-family="'DejaVu Sans Condensed', 'DejaVu Sans', sans-serif" font-size="19.2" fill="#f0ece4" text-anchor="middle" >N</text>
<line x1="1823.50" y1="279.00" x2="1823.50" y2="301.00" stroke="#5e5e5e" stroke-width="1" />
<text x="1808.75" y="296.80" font-family="'DejaVu Sans Condensed', 'DejaVu Sans', sans-serif" font-size="19.2" fill="#f0ece4" text-anchor="middle" >O</text>
<line x1="1914.50" y1="279.00" x2="1914.50" y2="301.00" stroke="#5e5e5e" stroke-width="1" />
<text x="1867.95" y="296.80" font-family="'DejaVu Sans Condensed', 'DejaVu Sans', sans-serif" font-size="19.2" fill="#f0ece4" text-anchor="middle" >P</text>
<line x1="2038.50" y1="279.00" x2="2038.50" y2="301.00" stroke="#5e5e5e" stroke-width="1" />
<text x="1976.00" y="296.80" font-family="'DejaVu Sans Condensed', 'DejaVu Sans', sans-serif" font-size="19.2" fill="#f0ece4" text-anchor="middle" >Q</text>
<line x1="2131.50" y1="279.00" x2="2131.50" y2="301.00" stroke="#5e5e5e" stroke-width="1" />
<text x="2083.90" y="296.80" font-family="'DejaVu Sans Condensed', 'DejaVu Sans', sans-serif" font-size="19.2" fill="#f0ece4" text-anchor="middle" >R</text>
<line x1="2222.50" y1="279.00" x2="2222.50" y2="301.00" stroke="#5e5e5e" stroke-width="1" />
<text x="2176.66" y="296.80" font-family="'DejaVu Sans Condensed', 'DejaVu Sans', sans-serif" font-size="19.2" fill="#f0ece4" text-anchor="middle" >S</text>
<line x1="2314.50" y1="279.00" x2="2314.50" y2="301.00" stroke="#5e5e5e" stroke-width="1" />
<text x="2268.49" y="296.80" font-family="'DejaVu Sans Condensed', 'DejaVu Sans', sans-serif" font-size="19.2" fill="#f0ece4" text-anchor="middle" >T</text>
<line x1="2406.50" y1="279.00" x2="2406.50" y2="301.00" stroke="#5e5e5e" stroke-width="1" />
<text x="2360.40" y="296.80" font-family="'DejaVu Sans Condensed', 'DejaVu Sans', sans-serif" font-size="19.2" fill="#f0ece4" text-anchor="middle" >U</text>
<line x1="2498.50" y1="279.00" x2="2498.50" y2="301.00" stroke="#5e5e5e" stroke-width="1" />
<text x="2452.40" y="296.80" font-family="'DejaVu Sans Condensed', 'DejaVu Sans', sans-serif" font-size="19.2" fill="#f0ece4" text-anchor="middle" >V</text>
<line x1="2590.50" y1="279.00" x2="2590.50" y2="301.00" stroke="#5e5e5e" stroke-width="1" />
<text x="2544.39" y="296.80" font-family="'DejaVu Sans Condensed', 'DejaVu Sans', sans-serif" font-size="19.2" fill="#f0ece4" text-anchor="middle" >W</text>
<line x1="2682.50" y1="279.00" x2="2682.50" y2="301.00" stroke="#5e5e5e" stroke-width="1" />
<text x="2636.26" y="296.80" font-family="'DejaVu Sans Condensed', 'DejaVu Sans', sans-serif" font-size="19.2" fill="#f0ece4" text-anchor="middle" >X</text>
<line x1="2774.50" y1="279.00" x2="2774.50" y2="301.00" stroke="#5e5e5e" stroke-width="1" />
<text x="2728.24" y="296.80" font-family="'DejaVu Sans Condensed', 'DejaVu Sans', sans-serif" font-size="19.2" fill="#f0ece4" text-anchor="middle" >Y</text>
<line x1="2866.50" y1="279.00" x2="2866.50" y2="301.00" stroke="#5e5e5e" stroke-width="1" />
<text x="2820.15" y="296.80" font-family="'DejaVu Sans Condensed', 'DejaVu Sans', sans-serif" font-size="19.2" fill="#f0ece4" text-anchor="middle" >Z</text>
</g>
<path d="M28 297.6 H44 V282.7 Z" fill="#6b6b6b" />
<rect x="11.00" y="301.00" width="36.00" height="1369.00" fill="#0a0a0a" />
<clipPath id="rhc"><rect x="11" y="301" width="36" height="369"/></clipPath>
<clipPath id="rhc2"><rect x="11" y="301" width="36" height="1369"/></clipPath>
<g clip-path="url(#rhc2)">
<rect x="11.00" y="301.70" width="35.20" height="37.70" fill="#646464" />
<line x1="11.00" y1="301.50" x2="46.20" y2="301.50" stroke="#c4c4c4" stroke-width="1" />
<line x1="47.20" y1="300.80" x2="47.20" y2="339.70" stroke="#1a7f45" stroke-width="2" />
<line x1="11.00" y1="339.50" x2="46.50" y2="339.50" stroke="#9a9a9a" stroke-width="1" />
<text x="29.35" y="335.20" font-family="'DejaVu Sans Condensed', 'DejaVu Sans', sans-serif" font-size="19.2" fill="#fff" text-anchor="middle" >1</text>
<line x1="11.00" y1="374.50" x2="46.50" y2="374.50" stroke="#5e5e5e" stroke-width="1" />
<text x="29.73" y="369.90" font-family="'DejaVu Sans Condensed', 'DejaVu Sans', sans-serif" font-size="19.2" fill="#f0ece4" text-anchor="middle" >2</text>
<line x1="11.00" y1="409.50" x2="46.50" y2="409.50" stroke="#5e5e5e" stroke-width="1" />
<text x="29.53" y="404.80" font-family="'DejaVu Sans Condensed', 'DejaVu Sans', sans-serif" font-size="19.2" fill="#f0ece4" text-anchor="middle" >3</text>
<line x1="11.00" y1="434.50" x2="46.50" y2="434.50" stroke="#5e5e5e" stroke-width="1" />
<text x="29.56" y="429.90" font-family="'DejaVu Sans Condensed', 'DejaVu Sans', sans-serif" font-size="19.2" fill="#f0ece4" text-anchor="middle" >4</text>
<line x1="11.00" y1="464.50" x2="46.50" y2="464.50" stroke="#5e5e5e" stroke-width="1" />
<text x="29.58" y="458.40" font-family="'DejaVu Sans Condensed', 'DejaVu Sans', sans-serif" font-size="19.2" fill="#f0ece4" text-anchor="middle" >5</text>
<line x1="11.00" y1="472.50" x2="46.50" y2="472.50" stroke="#5e5e5e" stroke-width="1" />
<line x1="11.00" y1="502.50" x2="46.50" y2="502.50" stroke="#5e5e5e" stroke-width="1" />
<text x="29.52" y="497.90" font-family="'DejaVu Sans Condensed', 'DejaVu Sans', sans-serif" font-size="19.2" fill="#f0ece4" text-anchor="middle" >7</text>
<line x1="11.00" y1="528.50" x2="46.50" y2="528.50" stroke="#5e5e5e" stroke-width="1" />
<text x="29.50" y="523.50" font-family="'DejaVu Sans Condensed', 'DejaVu Sans', sans-serif" font-size="19.2" fill="#f0ece4" text-anchor="middle" >8</text>
<line x1="11.00" y1="564.50" x2="46.50" y2="564.50" stroke="#5e5e5e" stroke-width="1" />
<text x="29.56" y="557.90" font-family="'DejaVu Sans Condensed', 'DejaVu Sans', sans-serif" font-size="19.2" fill="#f0ece4" text-anchor="middle" >9</text>
<line x1="11.00" y1="601.50" x2="46.50" y2="601.50" stroke="#5e5e5e" stroke-width="1" />
<text x="29.12" y="596.73" font-family="'DejaVu Sans Condensed', 'DejaVu Sans', sans-serif" font-size="19.2" fill="#f0ece4" text-anchor="middle" textLength="21.97" lengthAdjust="spacingAndGlyphs" >10</text>
<line x1="11.00" y1="638.50" x2="46.50" y2="638.50" stroke="#5e5e5e" stroke-width="1" />
<text x="29.35" y="633.66" font-family="'DejaVu Sans Condensed', 'DejaVu Sans', sans-serif" font-size="19.2" fill="#f0ece4" text-anchor="middle" textLength="21.97" lengthAdjust="spacingAndGlyphs" >11</text>
<line x1="11.00" y1="675.50" x2="46.50" y2="675.50" stroke="#5e5e5e" stroke-width="1" />
<text x="29.41" y="670.59" font-family="'DejaVu Sans Condensed', 'DejaVu Sans', sans-serif" font-size="19.2" fill="#f0ece4" text-anchor="middle" textLength="21.97" lengthAdjust="spacingAndGlyphs" >12</text>
<line x1="11.00" y1="712.50" x2="46.50" y2="712.50" stroke="#5e5e5e" stroke-width="1" />
<text x="29.24" y="707.52" font-family="'DejaVu Sans Condensed', 'DejaVu Sans', sans-serif" font-size="19.2" fill="#f0ece4" text-anchor="middle" textLength="21.97" lengthAdjust="spacingAndGlyphs" >13</text>
<line x1="11.00" y1="748.50" x2="46.50" y2="748.50" stroke="#5e5e5e" stroke-width="1" />
<text x="29.03" y="744.45" font-family="'DejaVu Sans Condensed', 'DejaVu Sans', sans-serif" font-size="19.2" fill="#f0ece4" text-anchor="middle" textLength="21.97" lengthAdjust="spacingAndGlyphs" >14</text>
<line x1="11.00" y1="785.50" x2="46.50" y2="785.50" stroke="#5e5e5e" stroke-width="1" />
<text x="29.30" y="781.38" font-family="'DejaVu Sans Condensed', 'DejaVu Sans', sans-serif" font-size="19.2" fill="#f0ece4" text-anchor="middle" textLength="21.97" lengthAdjust="spacingAndGlyphs" >15</text>
<line x1="11.00" y1="822.50" x2="46.50" y2="822.50" stroke="#5e5e5e" stroke-width="1" />
<text x="29.09" y="818.31" font-family="'DejaVu Sans Condensed', 'DejaVu Sans', sans-serif" font-size="19.2" fill="#f0ece4" text-anchor="middle" textLength="21.97" lengthAdjust="spacingAndGlyphs" >16</text>
<line x1="11.00" y1="859.50" x2="46.50" y2="859.50" stroke="#5e5e5e" stroke-width="1" />
<text x="29.28" y="855.24" font-family="'DejaVu Sans Condensed', 'DejaVu Sans', sans-serif" font-size="19.2" fill="#f0ece4" text-anchor="middle" textLength="21.97" lengthAdjust="spacingAndGlyphs" >17</text>
<line x1="11.00" y1="896.50" x2="46.50" y2="896.50" stroke="#5e5e5e" stroke-width="1" />
<text x="29.14" y="892.17" font-family="'DejaVu Sans Condensed', 'DejaVu Sans', sans-serif" font-size="19.2" fill="#f0ece4" text-anchor="middle" textLength="21.97" lengthAdjust="spacingAndGlyphs" >18</text>
<line x1="11.00" y1="933.50" x2="46.50" y2="933.50" stroke="#5e5e5e" stroke-width="1" />
<text x="29.15" y="929.10" font-family="'DejaVu Sans Condensed', 'DejaVu Sans', sans-serif" font-size="19.2" fill="#f0ece4" text-anchor="middle" textLength="21.97" lengthAdjust="spacingAndGlyphs" >19</text>
<line x1="11.00" y1="970.50" x2="46.50" y2="970.50" stroke="#5e5e5e" stroke-width="1" />
<text x="29.43" y="966.03" font-family="'DejaVu Sans Condensed', 'DejaVu Sans', sans-serif" font-size="19.2" fill="#f0ece4" text-anchor="middle" textLength="21.97" lengthAdjust="spacingAndGlyphs" >20</text>
<line x1="11.00" y1="1007.50" x2="46.50" y2="1007.50" stroke="#5e5e5e" stroke-width="1" />
<text x="29.66" y="1002.96" font-family="'DejaVu Sans Condensed', 'DejaVu Sans', sans-serif" font-size="19.2" fill="#f0ece4" text-anchor="middle" textLength="21.97" lengthAdjust="spacingAndGlyphs" >21</text>
<line x1="11.00" y1="1044.50" x2="46.50" y2="1044.50" stroke="#5e5e5e" stroke-width="1" />
<text x="29.73" y="1039.89" font-family="'DejaVu Sans Condensed', 'DejaVu Sans', sans-serif" font-size="19.2" fill="#f0ece4" text-anchor="middle" textLength="21.97" lengthAdjust="spacingAndGlyphs" >22</text>
<line x1="11.00" y1="1081.50" x2="46.50" y2="1081.50" stroke="#5e5e5e" stroke-width="1" />
<text x="29.55" y="1076.82" font-family="'DejaVu Sans Condensed', 'DejaVu Sans', sans-serif" font-size="19.2" fill="#f0ece4" text-anchor="middle" textLength="21.97" lengthAdjust="spacingAndGlyphs" >23</text>
<line x1="11.00" y1="1118.50" x2="46.50" y2="1118.50" stroke="#5e5e5e" stroke-width="1" />
<text x="29.35" y="1113.75" font-family="'DejaVu Sans Condensed', 'DejaVu Sans', sans-serif" font-size="19.2" fill="#f0ece4" text-anchor="middle" textLength="21.97" lengthAdjust="spacingAndGlyphs" >24</text>
<line x1="11.00" y1="1155.50" x2="46.50" y2="1155.50" stroke="#5e5e5e" stroke-width="1" />
<text x="29.62" y="1149.10" font-family="'DejaVu Sans Condensed', 'DejaVu Sans', sans-serif" font-size="19.2" fill="#f0ece4" text-anchor="middle" textLength="21.97" lengthAdjust="spacingAndGlyphs" >25</text>
<line x1="11.00" y1="1158.50" x2="46.50" y2="1158.50" stroke="#5e5e5e" stroke-width="1" />
<line x1="11.00" y1="1161.50" x2="46.50" y2="1161.50" stroke="#5e5e5e" stroke-width="1" />
<line x1="11.00" y1="1195.50" x2="46.50" y2="1195.50" stroke="#5e5e5e" stroke-width="1" />
<text x="29.45" y="1191.20" font-family="'DejaVu Sans Condensed', 'DejaVu Sans', sans-serif" font-size="19.2" fill="#f0ece4" text-anchor="middle" textLength="21.97" lengthAdjust="spacingAndGlyphs" >28</text>
<line x1="11.00" y1="1201.50" x2="46.50" y2="1201.50" stroke="#5e5e5e" stroke-width="1" />
<line x1="11.00" y1="1236.50" x2="46.50" y2="1236.50" stroke="#5e5e5e" stroke-width="1" />
<text x="29.41" y="1232.00" font-family="'DejaVu Sans Condensed', 'DejaVu Sans', sans-serif" font-size="19.2" fill="#f0ece4" text-anchor="middle" textLength="21.97" lengthAdjust="spacingAndGlyphs" >30</text>
<line x1="11.00" y1="1271.50" x2="46.50" y2="1271.50" stroke="#5e5e5e" stroke-width="1" />
<text x="29.64" y="1266.70" font-family="'DejaVu Sans Condensed', 'DejaVu Sans', sans-serif" font-size="19.2" fill="#f0ece4" text-anchor="middle" textLength="21.97" lengthAdjust="spacingAndGlyphs" >31</text>
<line x1="11.00" y1="1307.50" x2="46.50" y2="1307.50" stroke="#5e5e5e" stroke-width="1" />
<text x="29.70" y="1302.60" font-family="'DejaVu Sans Condensed', 'DejaVu Sans', sans-serif" font-size="19.2" fill="#f0ece4" text-anchor="middle" textLength="21.97" lengthAdjust="spacingAndGlyphs" >32</text>
<line x1="11.00" y1="1342.50" x2="46.50" y2="1342.50" stroke="#5e5e5e" stroke-width="1" />
<text x="29.53" y="1337.90" font-family="'DejaVu Sans Condensed', 'DejaVu Sans', sans-serif" font-size="19.2" fill="#f0ece4" text-anchor="middle" textLength="21.97" lengthAdjust="spacingAndGlyphs" >33</text>
<line x1="11.00" y1="1378.50" x2="46.50" y2="1378.50" stroke="#5e5e5e" stroke-width="1" />
<text x="29.32" y="1374.10" font-family="'DejaVu Sans Condensed', 'DejaVu Sans', sans-serif" font-size="19.2" fill="#f0ece4" text-anchor="middle" textLength="21.97" lengthAdjust="spacingAndGlyphs" >34</text>
<line x1="11.00" y1="1408.50" x2="46.50" y2="1408.50" stroke="#5e5e5e" stroke-width="1" />
<text x="29.59" y="1403.70" font-family="'DejaVu Sans Condensed', 'DejaVu Sans', sans-serif" font-size="19.2" fill="#f0ece4" text-anchor="middle" textLength="21.97" lengthAdjust="spacingAndGlyphs" >35</text>
<line x1="11.00" y1="1444.50" x2="46.50" y2="1444.50" stroke="#5e5e5e" stroke-width="1" />
<text x="29.38" y="1438.00" font-family="'DejaVu Sans Condensed', 'DejaVu Sans', sans-serif" font-size="19.2" fill="#f0ece4" text-anchor="middle" textLength="21.97" lengthAdjust="spacingAndGlyphs" >36</text>
<line x1="11.00" y1="1449.50" x2="46.50" y2="1449.50" stroke="#5e5e5e" stroke-width="1" />
<line x1="11.00" y1="1484.50" x2="46.50" y2="1484.50" stroke="#5e5e5e" stroke-width="1" />
<text x="29.43" y="1480.00" font-family="'DejaVu Sans Condensed', 'DejaVu Sans', sans-serif" font-size="19.2" fill="#f0ece4" text-anchor="middle" textLength="21.97" lengthAdjust="spacingAndGlyphs" >38</text>
<line x1="11.00" y1="1490.50" x2="46.50" y2="1490.50" stroke="#5e5e5e" stroke-width="1" />
<line x1="11.00" y1="1525.50" x2="46.50" y2="1525.50" stroke="#5e5e5e" stroke-width="1" />
<text x="29.65" y="1520.80" font-family="'DejaVu Sans Condensed', 'DejaVu Sans', sans-serif" font-size="19.2" fill="#f0ece4" text-anchor="middle" textLength="21.97" lengthAdjust="spacingAndGlyphs" >40</text>
<line x1="11.00" y1="1560.50" x2="46.50" y2="1560.50" stroke="#5e5e5e" stroke-width="1" />
<text x="29.87" y="1556.00" font-family="'DejaVu Sans Condensed', 'DejaVu Sans', sans-serif" font-size="19.2" fill="#f0ece4" text-anchor="middle" textLength="21.97" lengthAdjust="spacingAndGlyphs" >41</text>
<line x1="11.00" y1="1595.50" x2="46.50" y2="1595.50" stroke="#5e5e5e" stroke-width="1" />
<text x="29.94" y="1591.30" font-family="'DejaVu Sans Condensed', 'DejaVu Sans', sans-serif" font-size="19.2" fill="#f0ece4" text-anchor="middle" textLength="21.97" lengthAdjust="spacingAndGlyphs" >42</text>
<line x1="11.00" y1="1624.50" x2="46.50" y2="1624.50" stroke="#5e5e5e" stroke-width="1" />
<text x="29.76" y="1620.20" font-family="'DejaVu Sans Condensed', 'DejaVu Sans', sans-serif" font-size="19.2" fill="#f0ece4" text-anchor="middle" textLength="21.97" lengthAdjust="spacingAndGlyphs" >43</text>
<line x1="11.00" y1="1649.50" x2="46.50" y2="1649.50" stroke="#5e5e5e" stroke-width="1" />
<text x="29.56" y="1644.90" font-family="'DejaVu Sans Condensed', 'DejaVu Sans', sans-serif" font-size="19.2" fill="#f0ece4" text-anchor="middle" textLength="21.97" lengthAdjust="spacingAndGlyphs" >44</text>
<line x1="11.00" y1="1674.50" x2="46.50" y2="1674.50" stroke="#5e5e5e" stroke-width="1" />
<text x="29.83" y="1669.00" font-family="'DejaVu Sans Condensed', 'DejaVu Sans', sans-serif" font-size="19.2" fill="#f0ece4" text-anchor="middle" textLength="21.97" lengthAdjust="spacingAndGlyphs" >45</text>
</g>
<path d="M25.5 465.4 Q29 468.3 32.5 465.4" fill="none" stroke="#f0ece4" stroke-width="1.4" />
<line x1="47.00" y1="434.50" x2="2860.30" y2="434.50" stroke="#9c9c9c" stroke-width="1" />
<text x="76.23" y="333.80" font-family="'DejaVu Sans Condensed', 'DejaVu Sans', sans-serif" font-size="33.6" fill="#1c1c1c" font-weight="bold" textLength="481.30" lengthAdjust="spacingAndGlyphs" >Returns on Invested Capital</text>
<text x="76.97" y="367.90" font-family="'DejaVu Sans', sans-serif" font-size="26.4" fill="#000" font-weight="bold" textLength="271.22" lengthAdjust="spacingAndGlyphs" >ABC Company Inc.</text>
<text x="74.75" y="398.60" font-family="'DejaVu Sans Condensed', 'DejaVu Sans', sans-serif" font-size="19.2" fill="#276fe6" font-weight="bold" textLength="228.17" lengthAdjust="spacingAndGlyphs" >Go to Table of Contents</text>
<line x1="75.30" y1="401.10" x2="302.20" y2="401.10" stroke="#276fe6" stroke-width="1.8" />
<rect x="71.30" y="434.80" width="475.60" height="29.80" fill="#4b4fd1" />
<rect x="71.80" y="472.00" width="475.10" height="30.80" fill="#4bb3e8" />
<text x="207.61" y="458.30" font-family="'DejaVu Sans Condensed', 'DejaVu Sans', sans-serif" font-size="24.0" fill="#fff" font-weight="bold" textLength="202.97" lengthAdjust="spacingAndGlyphs" >Years to payback</text>
<text x="289.06" y="495.60" font-family="'DejaVu Sans Condensed', 'DejaVu Sans', sans-serif" font-size="24.0" fill="#fff" font-weight="bold" textLength="39.59" lengthAdjust="spacingAndGlyphs" >3.6</text>
<rect x="702.00" y="434.80" width="468.60" height="29.80" fill="#4b4fd1" />
<rect x="702.50" y="472.00" width="468.10" height="30.80" fill="#4bb3e8" />
<text x="747.24" y="458.30" font-family="'DejaVu Sans Condensed', 'DejaVu Sans', sans-serif" font-size="24.0" fill="#fff" font-weight="bold" textLength="371.62" lengthAdjust="spacingAndGlyphs" >5-Year Cash Generated ($&#x27;000)</text>
<text x="895.97" y="495.60" font-family="'DejaVu Sans Condensed', 'DejaVu Sans', sans-serif" font-size="24.0" fill="#fff" font-weight="bold" textLength="69.57" lengthAdjust="spacingAndGlyphs" >1,816</text>
<rect x="1326.30" y="434.80" width="468.70" height="29.80" fill="#4b4fd1" />
<rect x="1326.80" y="472.00" width="468.20" height="30.80" fill="#4bb3e8" />
<text x="1485.52" y="458.30" font-family="'DejaVu Sans Condensed', 'DejaVu Sans', sans-serif" font-size="24.0" fill="#fff" font-weight="bold" textLength="149.00" lengthAdjust="spacingAndGlyphs" >ROIC - 2030</text>
<text x="1519.56" y="495.60" font-family="'DejaVu Sans Condensed', 'DejaVu Sans', sans-serif" font-size="24.0" fill="#fff" font-weight="bold" textLength="82.01" lengthAdjust="spacingAndGlyphs" >76.3%</text>
<rect x="71.50" y="528.00" width="1723.50" height="36.50" fill="#4b4fd1" />
<text x="620.92" y="557.00" font-family="'DejaVu Sans Condensed', 'DejaVu Sans', sans-serif" font-size="28.8" fill="#fff" font-weight="bold" textLength="616.20" lengthAdjust="spacingAndGlyphs" >Returns on Invested Capital Chart ($&#x27;000)</text>
<rect x="71.50" y="1119.20" width="1723.50" height="36.40" fill="#4b4fd1" />
<text x="664.42" y="1148.50" font-family="'DejaVu Sans Condensed', 'DejaVu Sans', sans-serif" font-size="28.8" fill="#fff" font-weight="bold" textLength="527.60" lengthAdjust="spacingAndGlyphs" >Returns on Invested Capital ($&#x27;000)</text>
<rect x="71.50" y="1408.20" width="1723.50" height="36.20" fill="#4b4fd1" />
<text x="693.62" y="1437.20" font-family="'DejaVu Sans Condensed', 'DejaVu Sans', sans-serif" font-size="28.8" fill="#fff" font-weight="bold" textLength="470.90" lengthAdjust="spacingAndGlyphs" >Payback Period Analysis ($&#x27;000)</text>
<rect x="72.30" y="1161.20" width="1721.70" height="34.50" fill="#6e74e8" />
<line x1="1014.30" y1="1160.90" x2="1014.30" y2="1196.00" stroke="#fff" stroke-width="1.5" />
<line x1="1170.50" y1="1160.90" x2="1170.50" y2="1196.00" stroke="#fff" stroke-width="1.5" />
<line x1="1326.50" y1="1160.90" x2="1326.50" y2="1196.00" stroke="#fff" stroke-width="1.5" />
<line x1="1482.50" y1="1160.90" x2="1482.50" y2="1196.00" stroke="#fff" stroke-width="1.5" />
<line x1="1638.50" y1="1160.90" x2="1638.50" y2="1196.00" stroke="#fff" stroke-width="1.5" />
<text x="82.82" y="1186.10" font-family="'DejaVu Sans Condensed', 'DejaVu Sans', sans-serif" font-size="19.2" fill="#fff" font-weight="bold" textLength="103.93" lengthAdjust="spacingAndGlyphs" >Fiscal Year</text>
<text x="1093.08" y="1186.10" font-family="'DejaVu Sans Condensed', 'DejaVu Sans', sans-serif" font-size="19.2" fill="#fff" font-weight="bold" text-anchor="middle" textLength="49.78" lengthAdjust="spacingAndGlyphs" >2026</text>
<text x="1249.30" y="1186.10" font-family="'DejaVu Sans Condensed', 'DejaVu Sans', sans-serif" font-size="19.2" fill="#fff" font-weight="bold" text-anchor="middle" textLength="50.23" lengthAdjust="spacingAndGlyphs" >2027</text>
<text x="1405.15" y="1186.10" font-family="'DejaVu Sans Condensed', 'DejaVu Sans', sans-serif" font-size="19.2" fill="#fff" font-weight="bold" text-anchor="middle" textLength="49.92" lengthAdjust="spacingAndGlyphs" >2028</text>
<text x="1561.17" y="1186.10" font-family="'DejaVu Sans Condensed', 'DejaVu Sans', sans-serif" font-size="19.2" fill="#fff" font-weight="bold" text-anchor="middle" textLength="49.96" lengthAdjust="spacingAndGlyphs" >2029</text>
<text x="1717.03" y="1186.10" font-family="'DejaVu Sans Condensed', 'DejaVu Sans', sans-serif" font-size="19.2" fill="#fff" font-weight="bold" text-anchor="middle" textLength="49.67" lengthAdjust="spacingAndGlyphs" >2030</text>
<rect x="72.30" y="1450.00" width="1721.70" height="34.60" fill="#6e74e8" />
<line x1="1014.30" y1="1449.70" x2="1014.30" y2="1484.90" stroke="#fff" stroke-width="1.5" />
<line x1="1170.50" y1="1449.70" x2="1170.50" y2="1484.90" stroke="#fff" stroke-width="1.5" />
<line x1="1326.50" y1="1449.70" x2="1326.50" y2="1484.90" stroke="#fff" stroke-width="1.5" />
<line x1="1482.50" y1="1449.70" x2="1482.50" y2="1484.90" stroke="#fff" stroke-width="1.5" />
<line x1="1638.50" y1="1449.70" x2="1638.50" y2="1484.90" stroke="#fff" stroke-width="1.5" />
<text x="82.82" y="1474.60" font-family="'DejaVu Sans Condensed', 'DejaVu Sans', sans-serif" font-size="19.2" fill="#fff" font-weight="bold" textLength="103.93" lengthAdjust="spacingAndGlyphs" >Fiscal Year</text>
<text x="1093.08" y="1474.60" font-family="'DejaVu Sans Condensed', 'DejaVu Sans', sans-serif" font-size="19.2" fill="#fff" font-weight="bold" text-anchor="middle" textLength="49.78" lengthAdjust="spacingAndGlyphs" >2026</text>
<text x="1249.30" y="1474.60" font-family="'DejaVu Sans Condensed', 'DejaVu Sans', sans-serif" font-size="19.2" fill="#fff" font-weight="bold" text-anchor="middle" textLength="50.23" lengthAdjust="spacingAndGlyphs" >2027</text>
<text x="1405.15" y="1474.60" font-family="'DejaVu Sans Condensed', 'DejaVu Sans', sans-serif" font-size="19.2" fill="#fff" font-weight="bold" text-anchor="middle" textLength="49.92" lengthAdjust="spacingAndGlyphs" >2028</text>
<text x="1561.17" y="1474.60" font-family="'DejaVu Sans Condensed', 'DejaVu Sans', sans-serif" font-size="19.2" fill="#fff" font-weight="bold" text-anchor="middle" textLength="49.96" lengthAdjust="spacingAndGlyphs" >2029</text>
<text x="1717.03" y="1474.60" font-family="'DejaVu Sans Condensed', 'DejaVu Sans', sans-serif" font-size="19.2" fill="#fff" font-weight="bold" text-anchor="middle" textLength="49.67" lengthAdjust="spacingAndGlyphs" >2030</text>
<text x="92.11" y="1225.80" font-family="'DejaVu Sans Condensed', 'DejaVu Sans', sans-serif" font-size="19.2" fill="#000" textLength="49.62" lengthAdjust="spacingAndGlyphs" >Debts</text>
<text x="1161.17" y="1225.50" font-family="'DejaVu Sans Condensed', 'DejaVu Sans', sans-serif" font-size="19.2" fill="#000" text-anchor="end" textLength="31.90" lengthAdjust="spacingAndGlyphs" >283</text>
<text x="1317.26" y="1225.50" font-family="'DejaVu Sans Condensed', 'DejaVu Sans', sans-serif" font-size="19.2" fill="#000" text-anchor="end" textLength="31.90" lengthAdjust="spacingAndGlyphs" >237</text>
<text x="1472.93" y="1225.50" font-family="'DejaVu Sans Condensed', 'DejaVu Sans', sans-serif" font-size="19.2" fill="#000" text-anchor="end" textLength="31.91" lengthAdjust="spacingAndGlyphs" >190</text>
<text x="1629.38" y="1225.50" font-family="'DejaVu Sans Condensed', 'DejaVu Sans', sans-serif" font-size="19.2" fill="#000" text-anchor="end" textLength="31.93" lengthAdjust="spacingAndGlyphs" >141</text>
<text x="1784.93" y="1225.50" font-family="'DejaVu Sans Condensed', 'DejaVu Sans', sans-serif" font-size="19.2" fill="#000" text-anchor="end" textLength="21.28" lengthAdjust="spacingAndGlyphs" >90</text>
<text x="92.11" y="1260.40" font-family="'DejaVu Sans Condensed', 'DejaVu Sans', sans-serif" font-size="19.2" fill="#000" textLength="52.89" lengthAdjust="spacingAndGlyphs" >Equity</text>
<text x="1160.88" y="1260.60" font-family="'DejaVu Sans Condensed', 'DejaVu Sans', sans-serif" font-size="19.2" fill="#000" text-anchor="end" textLength="31.89" lengthAdjust="spacingAndGlyphs" >516</text>
<text x="1317.26" y="1260.60" font-family="'DejaVu Sans Condensed', 'DejaVu Sans', sans-serif" font-size="19.2" fill="#000" text-anchor="end" textLength="31.89" lengthAdjust="spacingAndGlyphs" >417</text>
<text x="1473.30" y="1260.60" font-family="'DejaVu Sans Condensed', 'DejaVu Sans', sans-serif" font-size="19.2" fill="#000" text-anchor="end" textLength="31.91" lengthAdjust="spacingAndGlyphs" >515</text>
<text x="1629.00" y="1260.60" font-family="'DejaVu Sans Condensed', 'DejaVu Sans', sans-serif" font-size="19.2" fill="#000" text-anchor="end" textLength="47.81" lengthAdjust="spacingAndGlyphs" >1,039</text>
<text x="1784.76" y="1260.60" font-family="'DejaVu Sans Condensed', 'DejaVu Sans', sans-serif" font-size="19.2" fill="#000" text-anchor="end" textLength="47.78" lengthAdjust="spacingAndGlyphs" >2,454</text>
<rect x="71.50" y="1271.20" width="1723.50" height="36.40" fill="#4bb3e8" />
<text x="76.11" y="1297.90" font-family="'DejaVu Sans Condensed', 'DejaVu Sans', sans-serif" font-size="21.6" fill="#fff" font-weight="bold" textLength="244.62" lengthAdjust="spacingAndGlyphs" >Total Invested Capital</text>
<text x="1158.70" y="1296.90" font-family="'DejaVu Sans Condensed', 'DejaVu Sans', sans-serif" font-size="19.2" fill="#fff" font-weight="bold" text-anchor="end" textLength="36.06" lengthAdjust="spacingAndGlyphs" >799</text>
<text x="1314.80" y="1296.90" font-family="'DejaVu Sans Condensed', 'DejaVu Sans', sans-serif" font-size="19.2" fill="#fff" font-weight="bold" text-anchor="end" textLength="36.06" lengthAdjust="spacingAndGlyphs" >655</text>
<text x="1470.80" y="1296.90" font-family="'DejaVu Sans Condensed', 'DejaVu Sans', sans-serif" font-size="19.2" fill="#fff" font-weight="bold" text-anchor="end" textLength="36.06" lengthAdjust="spacingAndGlyphs" >705</text>
<text x="1626.70" y="1296.90" font-family="'DejaVu Sans Condensed', 'DejaVu Sans', sans-serif" font-size="19.2" fill="#fff" font-weight="bold" text-anchor="end" textLength="54.64" lengthAdjust="spacingAndGlyphs" >1,179</text>
<text x="1782.97" y="1296.90" font-family="'DejaVu Sans Condensed', 'DejaVu Sans', sans-serif" font-size="19.2" fill="#fff" font-weight="bold" text-anchor="end" textLength="54.64" lengthAdjust="spacingAndGlyphs" >2,543</text>
<text x="91.61" y="1331.60" font-family="'DejaVu Sans Condensed', 'DejaVu Sans', sans-serif" font-size="19.2" fill="#000" textLength="329.87" lengthAdjust="spacingAndGlyphs" >Net Operating Profit After Tax (NOPAT)</text>
<text x="1168.18" y="1331.60" font-family="'DejaVu Sans Condensed', 'DejaVu Sans', sans-serif" font-size="19.2" fill="#000" text-anchor="end" textLength="45.79" lengthAdjust="spacingAndGlyphs" >(124)</text>
<text x="1324.18" y="1331.60" font-family="'DejaVu Sans Condensed', 'DejaVu Sans', sans-serif" font-size="19.2" fill="#000" text-anchor="end" textLength="34.97" lengthAdjust="spacingAndGlyphs" >(61)</text>
<text x="1472.97" y="1331.60" font-family="'DejaVu Sans Condensed', 'DejaVu Sans', sans-serif" font-size="19.2" fill="#000" text-anchor="end" textLength="31.92" lengthAdjust="spacingAndGlyphs" >108</text>
<text x="1629.52" y="1331.60" font-family="'DejaVu Sans Condensed', 'DejaVu Sans', sans-serif" font-size="19.2" fill="#000" text-anchor="end" textLength="31.92" lengthAdjust="spacingAndGlyphs" >532</text>
<text x="1785.38" y="1331.60" font-family="'DejaVu Sans Condensed', 'DejaVu Sans', sans-serif" font-size="19.2" fill="#000" text-anchor="end" textLength="47.83" lengthAdjust="spacingAndGlyphs" >1,421</text>
<rect x="71.50" y="1342.20" width="1723.50" height="36.60" fill="#4bb3e8" />
<text x="75.92" y="1369.10" font-family="'DejaVu Sans Condensed', 'DejaVu Sans', sans-serif" font-size="21.6" fill="#fff" font-weight="bold" textLength="60.52" lengthAdjust="spacingAndGlyphs" >ROIC</text>
<text x="1166.73" y="1368.60" font-family="'DejaVu Sans Condensed', 'DejaVu Sans', sans-serif" font-size="19.2" fill="#fff" font-weight="bold" text-anchor="end" textLength="72.76" lengthAdjust="spacingAndGlyphs" >-15.6%</text>
<text x="1322.73" y="1368.60" font-family="'DejaVu Sans Condensed', 'DejaVu Sans', sans-serif" font-size="19.2" fill="#fff" font-weight="bold" text-anchor="end" textLength="60.56" lengthAdjust="spacingAndGlyphs" >-8.4%</text>
<text x="1478.73" y="1368.60" font-family="'DejaVu Sans Condensed', 'DejaVu Sans', sans-serif" font-size="19.2" fill="#fff" font-weight="bold" text-anchor="end" textLength="65.58" lengthAdjust="spacingAndGlyphs" >15.9%</text>
<text x="1634.73" y="1368.60" font-family="'DejaVu Sans Condensed', 'DejaVu Sans', sans-serif" font-size="19.2" fill="#fff" font-weight="bold" text-anchor="end" textLength="64.97" lengthAdjust="spacingAndGlyphs" >56.5%</text>
<text x="1790.73" y="1368.60" font-family="'DejaVu Sans Condensed', 'DejaVu Sans', sans-serif" font-size="19.2" fill="#fff" font-weight="bold" text-anchor="end" textLength="64.79" lengthAdjust="spacingAndGlyphs" >76.3%</text>
<text x="91.81" y="1515.10" font-family="'DejaVu Sans Condensed', 'DejaVu Sans', sans-serif" font-size="19.2" fill="#000" textLength="161.34" lengthAdjust="spacingAndGlyphs" >Net Profit After Tax</text>
<text x="1168.18" y="1515.10" font-family="'DejaVu Sans Condensed', 'DejaVu Sans', sans-serif" font-size="19.2" fill="#000" text-anchor="end" textLength="45.79" lengthAdjust="spacingAndGlyphs" >(124)</text>
<text x="1324.18" y="1515.10" font-family="'DejaVu Sans Condensed', 'DejaVu Sans', sans-serif" font-size="19.2" fill="#000" text-anchor="end" textLength="34.97" lengthAdjust="spacingAndGlyphs" >(61)</text>
<text x="1472.97" y="1515.10" font-family="'DejaVu Sans Condensed', 'DejaVu Sans', sans-serif" font-size="19.2" fill="#000" text-anchor="end" textLength="31.92" lengthAdjust="spacingAndGlyphs" >108</text>
<text x="1629.52" y="1515.10" font-family="'DejaVu Sans Condensed', 'DejaVu Sans', sans-serif" font-size="19.2" fill="#000" text-anchor="end" textLength="31.92" lengthAdjust="spacingAndGlyphs" >532</text>
<text x="1785.38" y="1515.10" font-family="'DejaVu Sans Condensed', 'DejaVu Sans', sans-serif" font-size="19.2" fill="#000" text-anchor="end" textLength="47.83" lengthAdjust="spacingAndGlyphs" >1,421</text>
<text x="92.53" y="1550.40" font-family="'DejaVu Sans Condensed', 'DejaVu Sans', sans-serif" font-size="19.2" fill="#000" textLength="54.69" lengthAdjust="spacingAndGlyphs" >CAPEX</text>
<text x="1168.18" y="1550.40" font-family="'DejaVu Sans Condensed', 'DejaVu Sans', sans-serif" font-size="19.2" fill="#000" text-anchor="end" textLength="34.97" lengthAdjust="spacingAndGlyphs" >(60)</text>
<text x="1316.13" y="1550.40" font-family="'DejaVu Sans Condensed', 'DejaVu Sans', sans-serif" font-size="19.2" fill="#000" text-anchor="end" >-</text>
<text x="1472.13" y="1550.40" font-family="'DejaVu Sans Condensed', 'DejaVu Sans', sans-serif" font-size="19.2" fill="#000" text-anchor="end" >-</text>
<text x="1628.13" y="1550.40" font-family="'DejaVu Sans Condensed', 'DejaVu Sans', sans-serif" font-size="19.2" fill="#000" text-anchor="end" >-</text>
<text x="1784.13" y="1550.40" font-family="'DejaVu Sans Condensed', 'DejaVu Sans', sans-serif" font-size="19.2" fill="#000" text-anchor="end" >-</text>
<rect x="71.50" y="1560.20" width="1723.50" height="35.40" fill="#4bb3e8" />
<text x="75.34" y="1586.60" font-family="'DejaVu Sans Condensed', 'DejaVu Sans', sans-serif" font-size="21.6" fill="#fff" font-weight="bold" textLength="397.93" lengthAdjust="spacingAndGlyphs" >Cumulative Cash Generated (Spent)</text>
<text x="1168.28" y="1585.60" font-family="'DejaVu Sans Condensed', 'DejaVu Sans', sans-serif" font-size="19.2" fill="#fff" font-weight="bold" text-anchor="end" textLength="56.16" lengthAdjust="spacingAndGlyphs" >(184)</text>
<text x="1324.28" y="1585.60" font-family="'DejaVu Sans Condensed', 'DejaVu Sans', sans-serif" font-size="19.2" fill="#fff" font-weight="bold" text-anchor="end" textLength="56.16" lengthAdjust="spacingAndGlyphs" >(245)</text>
<text x="1480.28" y="1585.60" font-family="'DejaVu Sans Condensed', 'DejaVu Sans', sans-serif" font-size="19.2" fill="#fff" font-weight="bold" text-anchor="end" textLength="56.16" lengthAdjust="spacingAndGlyphs" >(137)</text>
<text x="1626.80" y="1585.60" font-family="'DejaVu Sans Condensed', 'DejaVu Sans', sans-serif" font-size="19.2" fill="#fff" font-weight="bold" text-anchor="end" textLength="36.06" lengthAdjust="spacingAndGlyphs" >395</text>
<text x="1782.52" y="1585.60" font-family="'DejaVu Sans Condensed', 'DejaVu Sans', sans-serif" font-size="19.2" fill="#fff" font-weight="bold" text-anchor="end" textLength="54.64" lengthAdjust="spacingAndGlyphs" >1,816</text>
<text x="73.92" y="1617.80" font-family="'DejaVu Sans Condensed', 'DejaVu Sans', sans-serif" font-size="19.2" fill="#1c1c1c" font-weight="bold" textLength="125.83" lengthAdjust="spacingAndGlyphs" >Payback year</text>
<rect x="1482.30" y="1597.50" width="156.30" height="28.10" fill="#2db5a6" />
<text x="1093.00" y="1617.80" font-family="'DejaVu Sans Condensed', 'DejaVu Sans', sans-serif" font-size="19.2" fill="#1c1c1c" font-weight="bold" text-anchor="middle" >-</text>
<text x="1249.00" y="1617.80" font-family="'DejaVu Sans Condensed', 'DejaVu Sans', sans-serif" font-size="19.2" fill="#1c1c1c" font-weight="bold" text-anchor="middle" >-</text>
<text x="1405.00" y="1617.80" font-family="'DejaVu Sans Condensed', 'DejaVu Sans', sans-serif" font-size="19.2" fill="#1c1c1c" font-weight="bold" text-anchor="middle" >-</text>
<text x="1560.62" y="1617.80" font-family="'DejaVu Sans Condensed', 'DejaVu Sans', sans-serif" font-size="19.2" fill="#1c1c1c" font-weight="bold" text-anchor="middle" >1</text>
<text x="1717.00" y="1617.80" font-family="'DejaVu Sans Condensed', 'DejaVu Sans', sans-serif" font-size="19.2" fill="#1c1c1c" font-weight="bold" text-anchor="middle" >-</text>
<rect x="276.00" y="597.30" width="46.00" height="12.70" fill="#4bb3e8" />
<text x="326.89" y="611.00" font-family="'DejaVu Sans Condensed', 'DejaVu Sans', sans-serif" font-size="24.0" fill="#000" font-weight="bold" textLength="266.21" lengthAdjust="spacingAndGlyphs" >Total Invested Capital</text>
<rect x="771.00" y="596.80" width="46.80" height="12.80" fill="#f07b6f" />
<text x="821.32" y="611.00" font-family="'DejaVu Sans Condensed', 'DejaVu Sans', sans-serif" font-size="24.0" fill="#000" font-weight="bold" textLength="477.53" lengthAdjust="spacingAndGlyphs" >Net Operating Profit After Tax (NOPAT)</text>
<line x1="1474.80" y1="603.30" x2="1523.40" y2="603.30" stroke="#2db5a6" stroke-width="4.2" stroke-linecap="round"/>
<circle cx="1499.00" cy="603.30" r="6.20" fill="#2db5a6" />
<text x="1525.82" y="611.00" font-family="'DejaVu Sans Condensed', 'DejaVu Sans', sans-serif" font-size="24.0" fill="#000" font-weight="bold" textLength="66.55" lengthAdjust="spacingAndGlyphs" >ROIC</text>
<line x1="210.60" y1="665.50" x2="1794.00" y2="665.50" stroke="#62a6cc" stroke-width="1" />
<text x="187.02" y="671.42" font-family="'DejaVu Sans Condensed', 'DejaVu Sans', sans-serif" font-size="19.2" fill="#000" font-weight="bold" text-anchor="end" textLength="54.64" lengthAdjust="spacingAndGlyphs" >3,000</text>
<line x1="210.60" y1="715.50" x2="1794.00" y2="715.50" stroke="#62a6cc" stroke-width="1" />
<text x="187.02" y="721.85" font-family="'DejaVu Sans Condensed', 'DejaVu Sans', sans-serif" font-size="19.2" fill="#000" font-weight="bold" text-anchor="end" textLength="54.64" lengthAdjust="spacingAndGlyphs" >2,500</text>
<line x1="210.60" y1="766.50" x2="1794.00" y2="766.50" stroke="#62a6cc" stroke-width="1" />
<text x="187.02" y="772.28" font-family="'DejaVu Sans Condensed', 'DejaVu Sans', sans-serif" font-size="19.2" fill="#000" font-weight="bold" text-anchor="end" textLength="54.64" lengthAdjust="spacingAndGlyphs" >2,000</text>
<line x1="210.60" y1="816.50" x2="1794.00" y2="816.50" stroke="#62a6cc" stroke-width="1" />
<text x="187.02" y="822.71" font-family="'DejaVu Sans Condensed', 'DejaVu Sans', sans-serif" font-size="19.2" fill="#000" font-weight="bold" text-anchor="end" textLength="54.64" lengthAdjust="spacingAndGlyphs" >1,500</text>
<line x1="210.60" y1="866.50" x2="1794.00" y2="866.50" stroke="#62a6cc" stroke-width="1" />
<text x="187.02" y="873.14" font-family="'DejaVu Sans Condensed', 'DejaVu Sans', sans-serif" font-size="19.2" fill="#000" font-weight="bold" text-anchor="end" textLength="54.64" lengthAdjust="spacingAndGlyphs" >1,000</text>
<line x1="210.60" y1="917.50" x2="1794.00" y2="917.50" stroke="#62a6cc" stroke-width="1" />
<text x="187.02" y="923.57" font-family="'DejaVu Sans Condensed', 'DejaVu Sans', sans-serif" font-size="19.2" fill="#000" font-weight="bold" text-anchor="end" textLength="36.06" lengthAdjust="spacingAndGlyphs" >500</text>
<text x="187.33" y="973.80" font-family="'DejaVu Sans Condensed', 'DejaVu Sans', sans-serif" font-size="19.2" fill="#000" font-weight="bold" text-anchor="end" >-</text>
<line x1="210.60" y1="1018.50" x2="1794.00" y2="1018.50" stroke="#62a6cc" stroke-width="1" />
<text x="193.18" y="1024.23" font-family="'DejaVu Sans Condensed', 'DejaVu Sans', sans-serif" font-size="19.2" fill="#000" font-weight="bold" text-anchor="end" textLength="56.06" lengthAdjust="spacingAndGlyphs" >(500)</text>
<rect x="247.20" y="887.21" width="121.80" height="81.19" fill="#4bb3e8" />
<rect x="369.00" y="968.40" width="121.80" height="11.91" fill="#f07b6f" />
<rect x="563.88" y="901.74" width="121.80" height="66.66" fill="#4bb3e8" />
<rect x="685.68" y="968.40" width="121.80" height="5.55" fill="#f07b6f" />
<rect x="880.56" y="896.69" width="121.80" height="71.71" fill="#4bb3e8" />
<rect x="1002.36" y="956.91" width="121.80" height="11.49" fill="#f07b6f" />
<rect x="1197.24" y="848.89" width="121.80" height="119.51" fill="#4bb3e8" />
<rect x="1319.04" y="914.14" width="121.80" height="54.26" fill="#f07b6f" />
<rect x="1513.92" y="711.31" width="121.80" height="257.09" fill="#4bb3e8" />
<rect x="1635.72" y="824.48" width="121.80" height="143.92" fill="#f07b6f" />
<line x1="210.20" y1="968.00" x2="1794.50" y2="968.00" stroke="#4a97cf" stroke-width="2" />
<line x1="211.00" y1="967.80" x2="211.00" y2="974.80" stroke="#4a97cf" stroke-width="1.8" />
<line x1="527.68" y1="967.80" x2="527.68" y2="974.80" stroke="#4a97cf" stroke-width="1.8" />
<line x1="844.36" y1="967.80" x2="844.36" y2="974.80" stroke="#4a97cf" stroke-width="1.8" />
<line x1="1161.04" y1="967.80" x2="1161.04" y2="974.80" stroke="#4a97cf" stroke-width="1.8" />
<line x1="1477.72" y1="967.80" x2="1477.72" y2="974.80" stroke="#4a97cf" stroke-width="1.8" />
<line x1="1794.40" y1="967.80" x2="1794.40" y2="974.80" stroke="#4a97cf" stroke-width="1.8" />
<path d="M367.74 955.70 L684.42 937.58 L1001.10 876.41 L1317.78 774.22 L1634.46 724.39" fill="none" stroke="#2db5a6" stroke-width="5.2" stroke-linejoin="round"/>
<circle cx="367.74" cy="955.70" r="39.30" fill="#2db5a6" />
<text x="368.14" y="963.60" font-family="'DejaVu Sans Condensed','DejaVu Sans',sans-serif" font-size="19.2" fill="#fff" font-weight="bold" text-anchor="middle" textLength="74.16" lengthAdjust="spacingAndGlyphs" >-15.6%</text>
<circle cx="684.42" cy="937.58" r="39.30" fill="#2db5a6" />
<text x="684.82" y="945.48" font-family="'DejaVu Sans Condensed','DejaVu Sans',sans-serif" font-size="19.2" fill="#fff" font-weight="bold" text-anchor="middle" textLength="61.46" lengthAdjust="spacingAndGlyphs" >-8.4%</text>
<circle cx="1001.10" cy="876.41" r="39.30" fill="#2db5a6" />
<text x="1001.00" y="884.31" font-family="'DejaVu Sans Condensed','DejaVu Sans',sans-serif" font-size="19.2" fill="#fff" font-weight="bold" text-anchor="middle" textLength="65.77" lengthAdjust="spacingAndGlyphs" >15.9%</text>
<circle cx="1317.78" cy="774.22" r="39.30" fill="#2db5a6" />
<text x="1317.98" y="782.12" font-family="'DejaVu Sans Condensed','DejaVu Sans',sans-serif" font-size="19.2" fill="#fff" font-weight="bold" text-anchor="middle" textLength="65.17" lengthAdjust="spacingAndGlyphs" >56.5%</text>
<circle cx="1634.46" cy="724.39" r="39.30" fill="#2db5a6" />
<text x="1634.75" y="732.29" font-family="'DejaVu Sans Condensed','DejaVu Sans',sans-serif" font-size="19.2" fill="#fff" font-weight="bold" text-anchor="middle" textLength="64.99" lengthAdjust="spacingAndGlyphs" >76.3%</text>
<text x="368.88" y="1089.60" font-family="'DejaVu Sans Condensed','DejaVu Sans',sans-serif" font-size="22.3" fill="#000" font-weight="bold" text-anchor="middle" textLength="55.84" lengthAdjust="spacingAndGlyphs" >2026</text>
<text x="685.83" y="1089.60" font-family="'DejaVu Sans Condensed','DejaVu Sans',sans-serif" font-size="22.3" fill="#000" font-weight="bold" text-anchor="middle" textLength="55.84" lengthAdjust="spacingAndGlyphs" >2027</text>
<text x="1002.33" y="1089.60" font-family="'DejaVu Sans Condensed','DejaVu Sans',sans-serif" font-size="22.3" fill="#000" font-weight="bold" text-anchor="middle" textLength="55.84" lengthAdjust="spacingAndGlyphs" >2028</text>
<text x="1319.03" y="1089.60" font-family="'DejaVu Sans Condensed','DejaVu Sans',sans-serif" font-size="22.3" fill="#000" font-weight="bold" text-anchor="middle" textLength="55.84" lengthAdjust="spacingAndGlyphs" >2029</text>
<text x="1635.54" y="1089.60" font-family="'DejaVu Sans Condensed','DejaVu Sans',sans-serif" font-size="22.3" fill="#000" font-weight="bold" text-anchor="middle" textLength="55.84" lengthAdjust="spacingAndGlyphs" >2030</text>
<rect x="11.00" y="1718.60" width="2880.00" height="32.40" fill="#141414" />
<line x1="11.00" y1="1718.50" x2="2891.00" y2="1718.50" stroke="#333333" stroke-width="1" />
<path d="M54.8 1686 L47.4 1693 L54.8 1700" fill="none" stroke="#8a8a8a" stroke-width="1.9" stroke-linecap="round" stroke-linejoin="round"/>
<path d="M95.8 1686 L103.2 1693 L95.8 1700" fill="none" stroke="#d0d0d0" stroke-width="1.9" stroke-linecap="round" stroke-linejoin="round"/>
<text x="189.37" y="1702.80" font-family="'Liberation Sans', sans-serif" font-size="20.3" fill="#fff" textLength="83.56" lengthAdjust="spacingAndGlyphs" >Contents</text>
<line x1="293.50" y1="1680.20" x2="293.50" y2="1707.80" stroke="#707070" stroke-width="1" />
<line x1="433.50" y1="1680.20" x2="433.50" y2="1707.80" stroke="#707070" stroke-width="1" />
<line x1="552.50" y1="1680.20" x2="552.50" y2="1707.80" stroke="#707070" stroke-width="1" />
<line x1="723.50" y1="1680.20" x2="723.50" y2="1707.80" stroke="#707070" stroke-width="1" />
<line x1="825.50" y1="1680.20" x2="825.50" y2="1707.80" stroke="#707070" stroke-width="1" />
<line x1="925.50" y1="1680.20" x2="925.50" y2="1707.80" stroke="#707070" stroke-width="1" />
<line x1="1051.50" y1="1680.20" x2="1051.50" y2="1707.80" stroke="#707070" stroke-width="1" />
<line x1="1154.50" y1="1680.20" x2="1154.50" y2="1707.80" stroke="#707070" stroke-width="1" />
<line x1="1209.50" y1="1680.20" x2="1209.50" y2="1707.80" stroke="#707070" stroke-width="1" />
<line x1="1270.50" y1="1680.20" x2="1270.50" y2="1707.80" stroke="#707070" stroke-width="1" />
<line x1="1331.50" y1="1680.20" x2="1331.50" y2="1707.80" stroke="#707070" stroke-width="1" />
<line x1="1459.50" y1="1680.20" x2="1459.50" y2="1707.80" stroke="#707070" stroke-width="1" />
<line x1="1587.50" y1="1680.20" x2="1587.50" y2="1707.80" stroke="#707070" stroke-width="1" />
<line x1="1714.50" y1="1680.20" x2="1714.50" y2="1707.80" stroke="#707070" stroke-width="1" />
<line x1="1775.50" y1="1680.20" x2="1775.50" y2="1707.80" stroke="#707070" stroke-width="1" />
<line x1="1860.50" y1="1680.20" x2="1860.50" y2="1707.80" stroke="#707070" stroke-width="1" />
<line x1="1958.50" y1="1680.20" x2="1958.50" y2="1707.80" stroke="#707070" stroke-width="1" />
<line x1="2035.50" y1="1680.20" x2="2035.50" y2="1707.80" stroke="#707070" stroke-width="1" />
<rect x="299.00" y="1675.80" width="127.80" height="36.20" fill="#fdea6c" rx="6.5" />
<text x="312.33" y="1702.80" font-family="'Liberation Sans', sans-serif" font-size="20.3" fill="#10151c" textLength="102.17" lengthAdjust="spacingAndGlyphs" >Dashboard</text>
<rect x="440.00" y="1675.80" width="105.80" height="36.20" fill="#fdea6c" rx="6.5" />
<text x="453.13" y="1702.80" font-family="'Liberation Sans', sans-serif" font-size="20.3" fill="#10151c" textLength="80.27" lengthAdjust="spacingAndGlyphs" >Revenue</text>
<rect x="559.00" y="1675.80" width="158.00" height="36.20" fill="#fdea6c" rx="6.5" />
<text x="571.07" y="1702.80" font-family="'Liberation Sans', sans-serif" font-size="20.3" fill="#10151c" textLength="134.16" lengthAdjust="spacingAndGlyphs" >COGS &amp; OPEX</text>
<rect x="730.30" y="1675.80" width="88.70" height="36.20" fill="#fdea6c" rx="6.5" />
<text x="742.03" y="1702.80" font-family="'Liberation Sans', sans-serif" font-size="20.3" fill="#10151c" textLength="64.32" lengthAdjust="spacingAndGlyphs" >Payroll</text>
<rect x="832.00" y="1675.80" width="87.30" height="36.20" fill="#fdea6c" rx="6.5" />
<text x="844.37" y="1702.80" font-family="'Liberation Sans', sans-serif" font-size="20.3" fill="#10151c" textLength="61.96" lengthAdjust="spacingAndGlyphs" >CAPEX</text>
<rect x="932.00" y="1675.80" width="112.80" height="36.20" fill="#fdea6c" rx="6.5" />
<text x="944.37" y="1702.80" font-family="'Liberation Sans', sans-serif" font-size="20.3" fill="#10151c" textLength="87.43" lengthAdjust="spacingAndGlyphs" >CapTable</text>
<rect x="1057.90" y="1675.80" width="90.10" height="36.20" fill="#fdea6c" rx="6.5" />
<text x="1070.27" y="1702.80" font-family="'Liberation Sans', sans-serif" font-size="20.3" fill="#10151c" textLength="65.69" lengthAdjust="spacingAndGlyphs" >Capital</text>
<rect x="1161.30" y="1675.80" width="41.50" height="36.20" fill="#4bb3e8" rx="6.5" />
<text x="1181.59" y="1702.80" font-family="'Liberation Sans', sans-serif" font-size="20" fill="#10151c" text-anchor="middle" textLength="18.90" lengthAdjust="spacingAndGlyphs" >IS</text>
<rect x="1216.00" y="1675.80" width="47.80" height="36.20" fill="#4bb3e8" rx="6.5" />
<text x="1239.79" y="1702.80" font-family="'Liberation Sans', sans-serif" font-size="20" fill="#10151c" text-anchor="middle" textLength="26.66" lengthAdjust="spacingAndGlyphs" >CF</text>
<rect x="1277.20" y="1675.80" width="47.70" height="36.20" fill="#4bb3e8" rx="6.5" />
<text x="1300.69" y="1702.80" font-family="'Liberation Sans', sans-serif" font-size="20" fill="#10151c" text-anchor="middle" textLength="26.68" lengthAdjust="spacingAndGlyphs" >BS</text>
<rect x="1338.00" y="1675.80" width="114.70" height="36.20" fill="#4bb3e8" rx="6.5" />
<text x="1350.38" y="1702.80" font-family="'Liberation Sans', sans-serif" font-size="20.3" fill="#10151c" textLength="88.86" lengthAdjust="spacingAndGlyphs" >Scenarios</text>
<rect x="1466.00" y="1675.80" width="114.60" height="36.20" fill="#4bb3e8" rx="6.5" />
<text x="1479.61" y="1702.80" font-family="'Liberation Sans', sans-serif" font-size="20.3" fill="#10151c" textLength="88.11" lengthAdjust="spacingAndGlyphs" >Valuation</text>
<rect x="1594.20" y="1675.80" width="113.60" height="36.20" fill="#4bb3e8" rx="6.5" />
<text x="1607.08" y="1702.80" font-family="'Liberation Sans', sans-serif" font-size="20.3" fill="#10151c" textLength="87.76" lengthAdjust="spacingAndGlyphs" >Summary</text>
<rect x="1721.20" y="1675.80" width="47.70" height="36.20" fill="#4bb3e8" rx="6.5" />
<text x="1744.66" y="1702.80" font-family="'Liberation Sans', sans-serif" font-size="20" fill="#10151c" text-anchor="middle" textLength="26.68" lengthAdjust="spacingAndGlyphs" >BE</text>
<rect x="1867.00" y="1675.80" width="85.00" height="36.20" fill="#4bb3e8" rx="6.5" />
<text x="1879.47" y="1702.80" font-family="'Liberation Sans', sans-serif" font-size="20.3" fill="#10151c" textLength="59.86" lengthAdjust="spacingAndGlyphs" >Charts</text>
<rect x="1964.60" y="1675.80" width="64.40" height="36.20" fill="#4bb3e8" rx="6.5" />
<text x="1976.33" y="1702.80" font-family="'Liberation Sans', sans-serif" font-size="20.3" fill="#10151c" textLength="40.40" lengthAdjust="spacingAndGlyphs" >KPIs</text>
<clipPath id="scc"><rect x="2041.5" y="1670" width="30.5" height="48"/></clipPath>
<g clip-path="url(#scc)">
<rect x="2041.50" y="1675.80" width="98.50" height="36.20" fill="#4bb3e8" rx="6.5" />
<text x="2053.58" y="1702.80" font-family="'Liberation Sans', sans-serif" font-size="20.3" fill="#10151c" textLength="90.27" lengthAdjust="spacingAndGlyphs" >Scenarios</text>
</g>
<linearGradient id="atg" x1="0" y1="0" x2="0" y2="1"><stop offset="0" stop-color="#ffffff"/><stop offset="0.2" stop-color="#ffffff"/><stop offset="0.92" stop-color="#cfe4f5"/><stop offset="1" stop-color="#e6f1fa"/></linearGradient>
<path d="M1775.5 1670 Q1781.7 1670 1781.7 1676.5 V1705.5 Q1781.7 1712 1788.2 1712 H1847.4 Q1853.9 1712 1853.9 1705.5 V1676.5 Q1853.9 1670 1860.4 1670 Z" fill="url(#atg)" />
<text x="1793.53" y="1697.70" font-family="'Liberation Sans', sans-serif" font-size="20.3" fill="#10151c" textLength="48.54" lengthAdjust="spacingAndGlyphs" >ROIC</text>
<rect x="1794.10" y="1705.10" width="47.90" height="2.70" fill="#1e8a4c" />
<circle cx="2088.50" cy="1692.70" r="2.10" fill="#e0e0e0" />
<circle cx="2095.00" cy="1692.70" r="2.10" fill="#e0e0e0" />
<circle cx="2101.50" cy="1692.70" r="2.10" fill="#e0e0e0" />
<path d="M2134.5 1693.6 H2152.4 M2143.4 1684.6 V1702.6" fill="none" stroke="#e6e6e6" stroke-width="1.6" />
<circle cx="2191.80" cy="1688.00" r="1.70" fill="#e0e0e0" />
<circle cx="2191.80" cy="1694.20" r="1.70" fill="#e0e0e0" />
<circle cx="2191.80" cy="1700.40" r="1.70" fill="#e0e0e0" />
<rect x="2216.00" y="1680.00" width="644.00" height="27.00" fill="#1c1c1c" rx="13.5" />
<path d="M2234 1686.5 L2224 1693.4 L2234 1700.3 Z" fill="#9e9e9e" stroke="#9e9e9e" stroke-width="1.5" stroke-linejoin="round"/>
<rect x="2241.90" y="1687.30" width="553.10" height="12.20" fill="#9e9e9e" rx="6.1" />
<path d="M2842 1686.5 L2852 1693.4 L2842 1700.3 Z" fill="#9e9e9e" stroke="#9e9e9e" stroke-width="1.5" stroke-linejoin="round"/>
<rect x="2862.80" y="279.50" width="26.20" height="1394.50" fill="#1a1a1a" rx="13" />
<path d="M2870 294.5 L2876 287 L2882 294.5 Z" fill="#9e9e9e" stroke="#9e9e9e" stroke-width="2" stroke-linejoin="round"/>
<rect x="2869.90" y="304.00" width="12.30" height="1335.00" fill="#9e9e9e" rx="6.1" />
<path d="M2870 1655.5 L2876 1663 L2882 1655.5 Z" fill="#9e9e9e" stroke="#9e9e9e" stroke-width="2" stroke-linejoin="round"/>
<text x="26.43" y="1740.80" font-family="'Liberation Sans', sans-serif" font-size="15.5" fill="#e6e6e6" textLength="43.20" lengthAdjust="spacingAndGlyphs" >Ready</text>
<path d="M108 1743 H100 V1727 H120 V1731.5" fill="none" stroke="#f0f0f0" stroke-width="1.6" stroke-linejoin="miter"/>
<line x1="100.00" y1="1730.30" x2="120.00" y2="1730.30" stroke="#f0f0f0" stroke-width="1.4" />
<line x1="102.60" y1="1734.00" x2="108.40" y2="1734.00" stroke="#f0f0f0" stroke-width="1.4" />
<line x1="102.60" y1="1737.20" x2="107.00" y2="1737.20" stroke="#f0f0f0" stroke-width="1.4" />
<line x1="102.60" y1="1740.30" x2="106.60" y2="1740.30" stroke="#f0f0f0" stroke-width="1.4" />
<circle cx="113.40" cy="1738.60" r="5.60" fill="#141414" stroke="#f0f0f0" stroke-width="1.6" />
<circle cx="113.40" cy="1738.60" r="2.70" fill="#f0f0f0" />
<circle cx="156.30" cy="1728.40" r="2.50" fill="none" stroke="#f0f0f0" stroke-width="1.5" />
<path d="M147.2 1730.6 C150 1733.4 153 1733.8 156.3 1733.8 C159.6 1733.8 162.6 1733.4 165.4 1730.6 M153.2 1734 V1738.2 L150.2 1745.2 M159.4 1734 V1737.2 M154.6 1740 L156.3 1737.4 L157.4 1739.2" fill="none" stroke="#f0f0f0" stroke-width="1.6" stroke-linecap="round" stroke-linejoin="round"/>
<path d="M158.8 1737.8 L167 1745.4 M167 1737.8 L158.8 1745.4" fill="none" stroke="#f0f0f0" stroke-width="1.5" stroke-linecap="round"/>
<text x="173.32" y="1740.80" font-family="'Liberation Sans', sans-serif" font-size="15.3" fill="#fff" font-weight="bold" textLength="187.80" lengthAdjust="spacingAndGlyphs" stroke="#fff" stroke-width="0.45">Accessibility: Investigate</text>
<rect x="2445.30" y="1719.00" width="59.70" height="32.00" fill="#262626" />
<rect x="2465.20" y="1725.40" width="17.90" height="17.80" fill="none" stroke="#f0f0f0" stroke-width="1.8" />
<line x1="2471.17" y1="1725.40" x2="2471.17" y2="1743.20" stroke="#f0f0f0" stroke-width="1.8" />
<line x1="2465.20" y1="1731.33" x2="2483.10" y2="1731.33" stroke="#f0f0f0" stroke-width="1.8" />
<line x1="2477.14" y1="1725.40" x2="2477.14" y2="1743.20" stroke="#f0f0f0" stroke-width="1.8" />
<line x1="2465.20" y1="1737.26" x2="2483.10" y2="1737.26" stroke="#f0f0f0" stroke-width="1.8" />
<rect x="2525.30" y="1725.40" width="19.60" height="17.80" fill="none" stroke="#f0f0f0" stroke-width="1.8" />
<rect x="2529.90" y="1729.90" width="10.20" height="9.20" fill="none" stroke="#f0f0f0" stroke-width="1.6" />
<line x1="2532.40" y1="1733.50" x2="2537.80" y2="1733.50" stroke="#f0f0f0" stroke-width="1" />
<line x1="2532.40" y1="1736.50" x2="2537.80" y2="1736.50" stroke="#f0f0f0" stroke-width="1" />
<rect x="2585.40" y="1725.40" width="19.60" height="17.80" fill="none" stroke="#f0f0f0" stroke-width="1.8" />
<path d="M2592.1 1725.4 V1735 M2597.8 1725.4 V1735 M2585.4 1735 H2597.8" fill="none" stroke="#f0f0f0" stroke-width="1.7" />
<line x1="2633.00" y1="1734.20" x2="2644.60" y2="1734.20" stroke="#e6e6e6" stroke-width="1.5" />
<line x1="2653.20" y1="1734.60" x2="2801.00" y2="1734.60" stroke="#b0b0b0" stroke-width="2" />
<path d="M2727.6 1726 H2735.2 V1743.2 H2727.6 V1737 L2726.4 1734.6 L2727.6 1732.2 Z" fill="#bdbdbd" />
<path d="M2809.2 1734.5 H2820.4 M2814.8 1728.9 V1740.1" fill="none" stroke="#e6e6e6" stroke-width="1.5" />
<text x="2838.86" y="1740.60" font-family="'Liberation Sans', sans-serif" font-size="15" fill="#e6e6e6" textLength="40.28" lengthAdjust="spacingAndGlyphs" >120%</text>
</svg>
</body></html>
